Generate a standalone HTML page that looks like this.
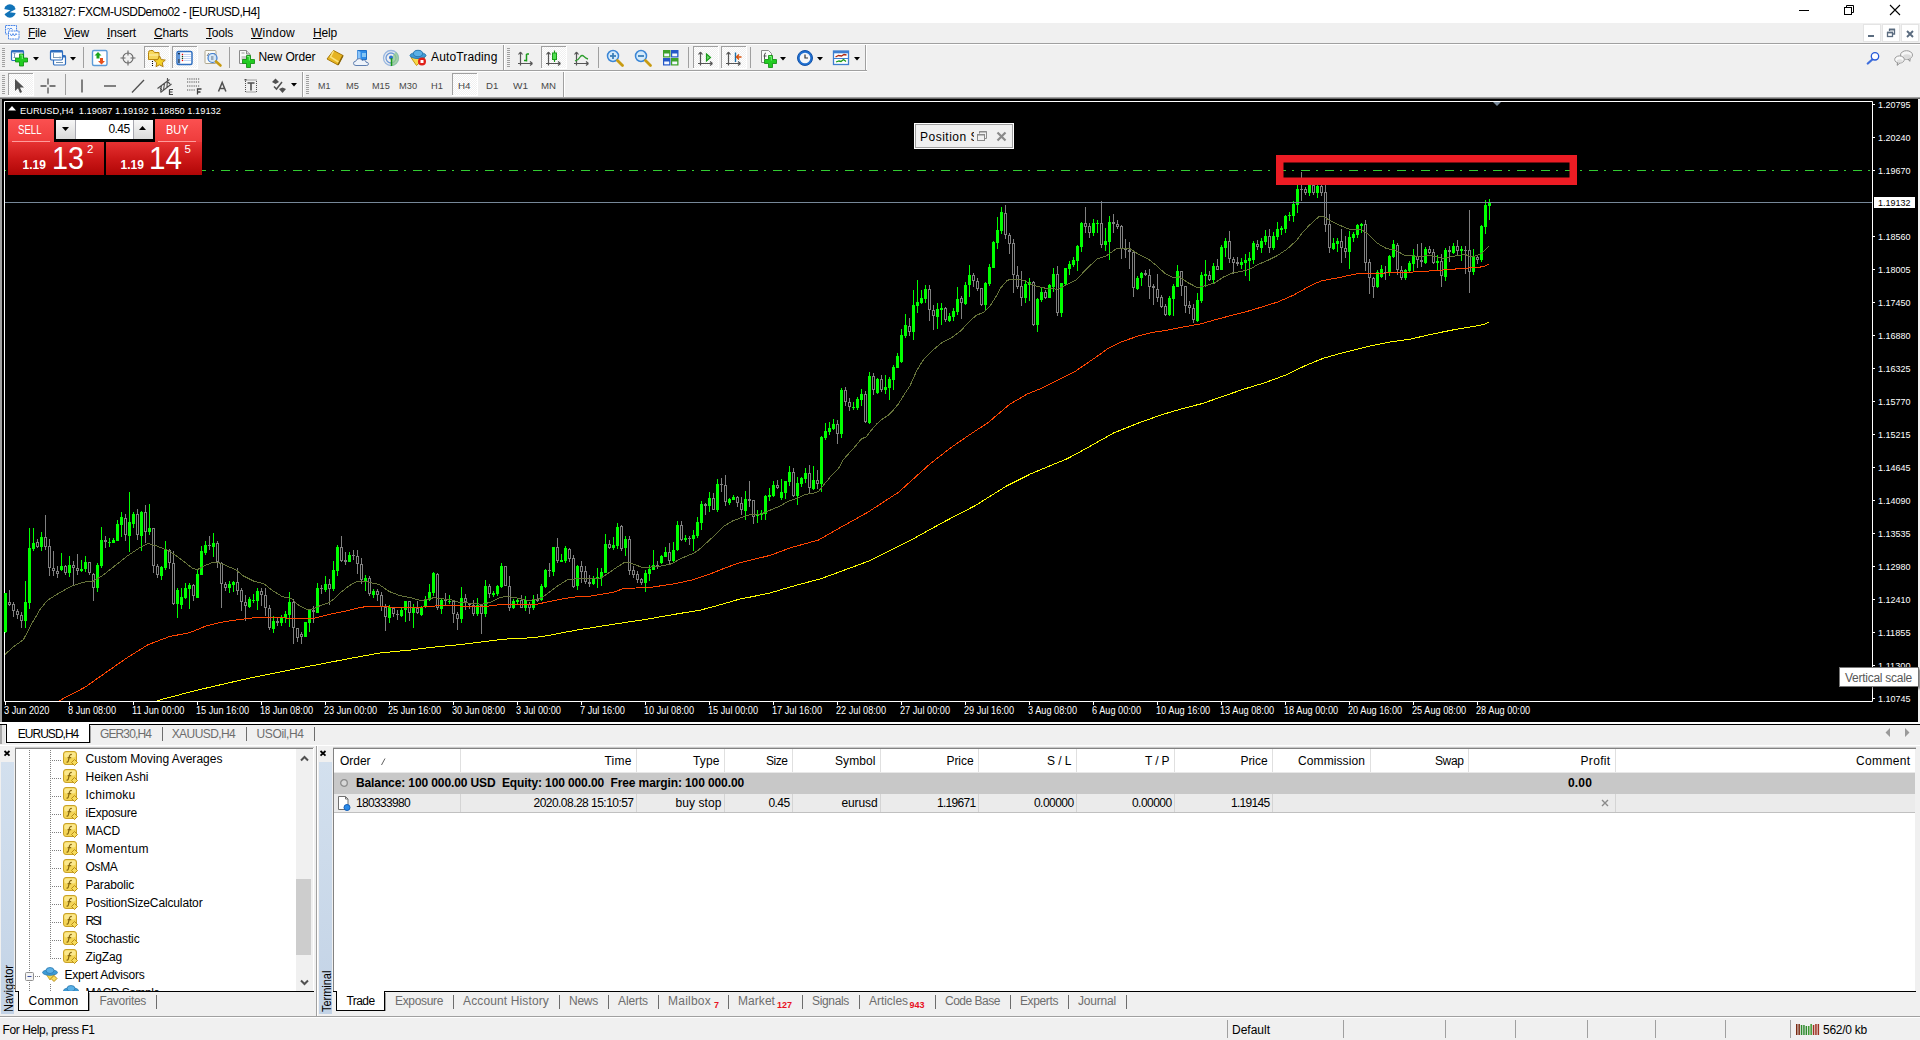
<!DOCTYPE html>
<html><head><meta charset="utf-8"><title>51331827: FXCM-USDDemo02 - [EURUSD,H4]</title>
<style>
html,body{margin:0;padding:0;}
body{width:1920px;height:1040px;overflow:hidden;background:#f0f0f0;font-family:"Liberation Sans", sans-serif;font-size:12px;position:relative;}
svg{display:block;overflow:visible}
u{text-decoration:underline;text-underline-offset:1px}
</style></head><body>
<div style="position:absolute;left:0px;top:0px;width:1920px;height:23px;background:#fff;"></div>
<svg style="position:absolute;left:0px;top:0px" width="20" height="22" viewBox="0 0 20 22"><ellipse cx="9.900" cy="11" rx="6" ry="6.800" fill="#1173b8"/><path d="M2.500 8.700L10.400 10.300L2.500 15.400Z" fill="#fff"/><path d="M17.500 8.300L9.800 12.200L17.500 13.300Z" fill="#fff"/></svg>
<span style="position:absolute;left:23.00px;top:3.84px;font-size:12px;line-height:16px;color:#000;white-space:pre;letter-spacing:-0.498px;">51331827: FXCM-USDDemo02 - [EURUSD,H4]</span>
<div style="position:absolute;left:1799px;top:10px;width:10px;height:1px;background:#000;"></div>
<svg style="position:absolute;left:1843px;top:4px" width="12" height="12"><path d="M3.500 3.500v-2h7v7h-2" fill="none" stroke="#000"/><rect x="1.500" y="3.500" width="7" height="7" fill="none" stroke="#000"/></svg>
<svg style="position:absolute;left:1889px;top:4px" width="12" height="12"><path d="M1 1l10 10M11 1l-10 10" stroke="#000" stroke-width="1.100"/></svg>
<div style="position:absolute;left:0px;top:23px;width:1920px;height:20px;background:#f0f0f0;"></div>
<svg style="position:absolute;left:4px;top:24px" width="17" height="17" viewBox="0 0 17 17"><rect x="1.500" y="1.500" width="11" height="8.500" fill="#f4f8fd" stroke="#4a86e8" stroke-dasharray="2 .6"/><path d="M3 5.500l1.500-1.500 1 1.500 1.500-1.500 1.500 1.500" stroke="#4a86e8" fill="none" stroke-width=".9"/><rect x="4.500" y="7" width="10.500" height="8" fill="#fff" stroke="#4a86e8" stroke-dasharray="2 .6"/><path d="M6 9.500l1.500 2.500 1.500-2.500 1.500 2.500 1.500-2.500 1 1.500" stroke="#4a86e8" fill="none" stroke-width=".9"/></svg>
<span style="position:absolute;left:28.00px;top:24.84px;font-size:12px;line-height:16px;color:#000;white-space:pre;letter-spacing:-0.334px;"><u>F</u>ile</span>
<span style="position:absolute;left:64.00px;top:24.84px;font-size:12px;line-height:16px;color:#000;white-space:pre;letter-spacing:-0.198px;"><u>V</u>iew</span>
<span style="position:absolute;left:107.00px;top:24.84px;font-size:12px;line-height:16px;color:#000;white-space:pre;letter-spacing:-0.169px;"><u>I</u>nsert</span>
<span style="position:absolute;left:154.00px;top:24.84px;font-size:12px;line-height:16px;color:#000;white-space:pre;letter-spacing:-0.224px;"><u>C</u>harts</span>
<span style="position:absolute;left:206.00px;top:24.84px;font-size:12px;line-height:16px;color:#000;white-space:pre;letter-spacing:-0.203px;"><u>T</u>ools</span>
<span style="position:absolute;left:251.00px;top:24.84px;font-size:12px;line-height:16px;color:#000;white-space:pre;letter-spacing:0.220px;"><u>W</u>indow</span>
<span style="position:absolute;left:313.00px;top:24.84px;font-size:12px;line-height:16px;color:#000;white-space:pre;letter-spacing:-0.170px;"><u>H</u>elp</span>
<div style="position:absolute;left:1863px;top:24px;width:18px;height:18px;background:#fff;border:1px solid #e4e4e4;box-sizing:border-box"></div>
<div style="position:absolute;left:1882px;top:24px;width:18px;height:18px;background:#fff;border:1px solid #e4e4e4;box-sizing:border-box"></div>
<div style="position:absolute;left:1901px;top:24px;width:18px;height:18px;background:#fff;border:1px solid #e4e4e4;box-sizing:border-box"></div>
<div style="position:absolute;left:1868px;top:35px;width:6px;height:2px;background:#5a6b7f;"></div>
<svg style="position:absolute;left:1886px;top:28px" width="10" height="10"><path d="M3.500 3v-1.500h5v4.500h-1.500" fill="none" stroke="#5a6b7f" stroke-width="1.300"/><path d="M3 1.500h6" stroke="#5a6b7f" stroke-width="1.600"/><rect x="1.500" y="4.500" width="5" height="4" fill="none" stroke="#5a6b7f" stroke-width="1.300"/><path d="M1 4.500h6" stroke="#5a6b7f" stroke-width="1.600"/></svg>
<svg style="position:absolute;left:1906px;top:30px" width="8" height="8"><path d="M1 1l6 6M7 1l-6 6" stroke="#5a6b7f" stroke-width="1.900"/></svg>
<div style="position:absolute;left:0px;top:43px;width:1920px;height:1px;background:#a0a0a0;"></div>
<div style="position:absolute;left:0px;top:44px;width:1920px;height:1px;background:#fff;"></div>
<div style="position:absolute;left:0px;top:70px;width:867px;height:1px;background:#a0a0a0;"></div>
<div style="position:absolute;left:0px;top:71px;width:867px;height:1px;background:#fff;"></div>
<div style="position:absolute;left:2px;top:48px;width:3px;height:1px;background:#a0a0a0;"></div>
<div style="position:absolute;left:2px;top:50px;width:3px;height:1px;background:#a0a0a0;"></div>
<div style="position:absolute;left:2px;top:52px;width:3px;height:1px;background:#a0a0a0;"></div>
<div style="position:absolute;left:2px;top:54px;width:3px;height:1px;background:#a0a0a0;"></div>
<div style="position:absolute;left:2px;top:56px;width:3px;height:1px;background:#a0a0a0;"></div>
<div style="position:absolute;left:2px;top:58px;width:3px;height:1px;background:#a0a0a0;"></div>
<div style="position:absolute;left:2px;top:60px;width:3px;height:1px;background:#a0a0a0;"></div>
<div style="position:absolute;left:2px;top:62px;width:3px;height:1px;background:#a0a0a0;"></div>
<div style="position:absolute;left:2px;top:64px;width:3px;height:1px;background:#a0a0a0;"></div>
<div style="position:absolute;left:2px;top:66px;width:3px;height:1px;background:#a0a0a0;"></div>
<svg style="position:absolute;left:8px;top:48px" width="20" height="20" viewBox="0 0 20 20"><rect x="3.5" y="2.5" width="12" height="10" rx="1.2" fill="#fff" stroke="#2f6fc0" stroke-width="1.2"/><rect x="3.5" y="2.5" width="12" height="2" fill="#2f6fc0"/><path d="M6.5 5v5M5.5 6l1-1 1 1M5.5 9l1 1 1-1" stroke="#7090b0" fill="none" stroke-width=".9"/><path d="M11.5 6h4v4h4v4h-4v4h-4v-4h-4v-4h4z" fill="#22cc22" stroke="#0a8a0a" stroke-width="0.8"/><path d="M12.3 7h2v4" fill="none" stroke="#9f9" stroke-width="1" opacity=".8"/></svg>
<svg style="position:absolute;left:32.5px;top:56.5px" width="6" height="4"><path d="M0 0h6L3 3.500z" fill="#000"/></svg>
<svg style="position:absolute;left:47px;top:48px" width="20" height="20" viewBox="0 0 20 20"><rect x="6.5" y="7.5" width="12" height="9.5" rx="1.2" fill="#fff" stroke="#2f6fc0" stroke-width="1.2"/><rect x="6.5" y="7.5" width="12" height="2" fill="#2f6fc0"/><path d="M9 14.5h7" stroke="#7090b0"/><rect x="3.5" y="2.5" width="12" height="9.5" rx="1.2" fill="#fff" stroke="#2f6fc0" stroke-width="1.2"/><rect x="3.5" y="2.5" width="12" height="2" fill="#2f6fc0"/><path d="M6.5 5v5M6 9.5h8M13 8.5l1 1-1 1" stroke="#7090b0" fill="none" stroke-width=".9"/></svg>
<svg style="position:absolute;left:69.5px;top:56.5px" width="6" height="4"><path d="M0 0h6L3 3.500z" fill="#000"/></svg>
<div style="position:absolute;left:83px;top:47px;width:1px;height:21px;background:#a0a0a0;"></div>
<svg style="position:absolute;left:90px;top:48px" width="20" height="20" viewBox="0 0 20 20"><rect x="2.5" y="2.5" width="14.5" height="15" rx="1.5" fill="#fff" stroke="#5b9bd8" stroke-width="1.4"/><path d="M8 4l3.5 3.5h-2v3h-3v-3h-2z" fill="#1aa51a"/><path d="M11.500 16.500l3.500-3.500h-2v-3h-3v3h-2z" fill="#e8501a"/></svg>
<svg style="position:absolute;left:118px;top:48px" width="20" height="20" viewBox="0 0 20 20"><circle cx="10" cy="10" r="5" fill="none" stroke="#666" stroke-width="1.100"/><path d="M10 2.500v5M10 12.500v5M2.500 10h5M12.500 10h5" stroke="#666" stroke-width="1.100"/></svg>
<div style="position:absolute;left:144px;top:46px;width:25px;height:22px;background:#f8f8f8;background-image:repeating-conic-gradient(#fff 0 25%,#f0f0f0 0 50%);background-size:2px 2px;"></div>
<div style="position:absolute;left:144px;top:46px;width:25px;height:1px;background:#a0a0a0;"></div>
<div style="position:absolute;left:144px;top:46px;width:1px;height:22px;background:#a0a0a0;"></div>
<div style="position:absolute;left:144px;top:68px;width:26px;height:1px;background:#fff;"></div>
<div style="position:absolute;left:169px;top:46px;width:1px;height:22px;background:#fff;"></div>
<svg style="position:absolute;left:146px;top:48px" width="20" height="20" viewBox="0 0 20 20"><path d="M2.500 4.500q0-2 2-2h2.500l1.500 2h4.500v7h-10.500z" fill="#f6d75c" stroke="#b8860b" stroke-width="1"/><path d="M3 7h9.500" stroke="#fff3b0"/><path d="M13.500 8l1.800 3.600 4 .5-3 2.700.8 3.900-3.600-1.900-3.500 1.900.7-3.900-2.900-2.700 4-.5z" fill="#f5d328" stroke="#b07d10" stroke-width="1"/><path d="M6.500 13v5" stroke="#000" stroke-dasharray="1 1"/></svg>
<div style="position:absolute;left:172px;top:46px;width:25px;height:22px;background:#f8f8f8;background-image:repeating-conic-gradient(#fff 0 25%,#f0f0f0 0 50%);background-size:2px 2px;"></div>
<div style="position:absolute;left:172px;top:46px;width:25px;height:1px;background:#a0a0a0;"></div>
<div style="position:absolute;left:172px;top:46px;width:1px;height:22px;background:#a0a0a0;"></div>
<div style="position:absolute;left:172px;top:68px;width:26px;height:1px;background:#fff;"></div>
<div style="position:absolute;left:197px;top:46px;width:1px;height:22px;background:#fff;"></div>
<svg style="position:absolute;left:174px;top:48px" width="20" height="20" viewBox="0 0 20 20"><rect x="3" y="3.500" width="15" height="13" rx="1.500" fill="#fff" stroke="#2f6fc0" stroke-width="1.500"/><rect x="3.800" y="4.300" width="2.400" height="11.400" fill="#5b95dd"/><rect x="4.300" y="11" width="1.200" height="4" fill="#444"/><path d="M9.500 6.500h7.500M9.500 8.500h7.500M9.500 10.500h7.500M9.500 12.500h7.500" stroke="#c4d6f4"/><rect x="7.800" y="5.800" width="1.300" height="1.300" fill="#e00"/><rect x="7.800" y="7.800" width="1.300" height="1.300" fill="#141"/><rect x="7.800" y="9.800" width="1.300" height="1.300" fill="#141"/><rect x="7.800" y="11.800" width="1.300" height="1.300" fill="#e00"/><rect x="4.300" y="5" width="1.300" height="1.300" fill="#000"/></svg>
<svg style="position:absolute;left:202px;top:48px" width="20" height="20" viewBox="0 0 20 20"><rect x="3" y="2.500" width="11" height="13" rx="1" fill="#fbfbf6" stroke="#b0a890" stroke-width="1"/><path d="M5 8l2-3M12 5l1 3" stroke="#777"/><circle cx="10.500" cy="10" r="4.500" fill="#cfe4f7" fill-opacity=".85" stroke="#3b7bd0" stroke-width="1.200"/><rect x="9" y="8" width="2.500" height="4" fill="#9ab"/><path d="M14 13.500l4.500 4" stroke="#c89b12" stroke-width="2.600" stroke-linecap="round"/></svg>
<div style="position:absolute;left:229px;top:47px;width:1px;height:21px;background:#a0a0a0;"></div>
<svg style="position:absolute;left:236px;top:48px" width="20" height="20" viewBox="0 0 20 20"><path d="M3.500 2.500h7l3.500 3.500v9.500h-10.500z" fill="#fafafa" stroke="#8a8a8a" stroke-width="1"/><path d="M10.500 2.500v3.500h3.500" fill="#ddd" stroke="#8a8a8a"/><path d="M5.500 5h3M5.500 9h6M5.500 11h6" stroke="#999"/><path d="M10.5 7.5h4v4h4v4h-4v4h-4v-4h-4v-4h4z" fill="#22cc22" stroke="#0a8a0a" stroke-width="0.8"/><path d="M11.3 8.5h2v4" fill="none" stroke="#9f9" stroke-width="1" opacity=".8"/></svg>
<span style="position:absolute;left:258.50px;top:48.84px;font-size:12px;line-height:16px;color:#000;white-space:pre;letter-spacing:-0.113px;">New Order</span>
<svg style="position:absolute;left:325px;top:48px" width="20" height="20" viewBox="0 0 20 20"><path d="M2 11l6.500-8.500 9.500 5-5 9.500z" fill="#e6b422" stroke="#a87908" stroke-width="1"/><path d="M8.500 3l-3 6 8 5" fill="none" stroke="#fbe27a" stroke-width="1.500"/><path d="M13 17l5-9.500" stroke="#8a6508" stroke-width="1.500"/></svg>
<svg style="position:absolute;left:352px;top:48px" width="20" height="20" viewBox="0 0 20 20"><path d="M5.500 2.500h9v9h-9z" fill="#2f8de8" stroke="#1d6fc8"/><path d="M5.500 2.500l3 1.500v9l-3-1.500z" fill="#8cc4f8"/><path d="M10 6h4M10 8h4" stroke="#dff"/><path d="M4 17.500q-2.500 0-2.500-2.200 0-2 2.300-2.100 .6-2.600 3.400-2.600 2.400 0 3.100 2 1-.9 2.400-.4 1.300.5 1.300 2 2.500 0 2.500 1.700t-2.300 1.600z" fill="#eef3fa" stroke="#5f7fb0" stroke-width="1"/></svg>
<svg style="position:absolute;left:381px;top:48px" width="20" height="20" viewBox="0 0 20 20"><circle cx="10" cy="10" r="7.500" fill="none" stroke="#9ab8e0" stroke-width="1.300"/><circle cx="10" cy="10" r="5" fill="none" stroke="#6f9ad8" stroke-width="1.300"/><path d="M10 10v8a8 8 0 0 0 8-8 8 8 0 0 0-3-6.200z" fill="#8fc98f" fill-opacity=".75"/><circle cx="10" cy="9.500" r="2" fill="#2a6fd0"/><path d="M10.500 10v8" stroke="#1a9a1a" stroke-width="1.500"/></svg>
<svg style="position:absolute;left:408px;top:48px" width="20" height="20" viewBox="0 0 20 20"><path d="M3 9.500l5.500 8 8.500-8z" fill="#f7d94a" stroke="#c79a10" stroke-width="1"/><ellipse cx="10" cy="7.500" rx="8" ry="3" fill="#3d9bd6" stroke="#2a78b0"/><ellipse cx="10" cy="5.500" rx="4.500" ry="3.200" fill="#5ab0e6" stroke="#2a78b0"/><circle cx="14" cy="13.500" r="4" fill="#e0201a"/><rect x="12.500" y="12" width="3" height="3" fill="#fff"/></svg>
<span style="position:absolute;left:431.00px;top:48.84px;font-size:12px;line-height:16px;color:#000;white-space:pre;letter-spacing:0.143px;">AutoTrading</span>
<div style="position:absolute;left:503px;top:45px;width:1px;height:25px;background:#a0a0a0;"></div>
<div style="position:absolute;left:504px;top:45px;width:1px;height:25px;background:#fff;"></div>
<div style="position:absolute;left:507px;top:48px;width:3px;height:1px;background:#a0a0a0;"></div>
<div style="position:absolute;left:507px;top:50px;width:3px;height:1px;background:#a0a0a0;"></div>
<div style="position:absolute;left:507px;top:52px;width:3px;height:1px;background:#a0a0a0;"></div>
<div style="position:absolute;left:507px;top:54px;width:3px;height:1px;background:#a0a0a0;"></div>
<div style="position:absolute;left:507px;top:56px;width:3px;height:1px;background:#a0a0a0;"></div>
<div style="position:absolute;left:507px;top:58px;width:3px;height:1px;background:#a0a0a0;"></div>
<div style="position:absolute;left:507px;top:60px;width:3px;height:1px;background:#a0a0a0;"></div>
<div style="position:absolute;left:507px;top:62px;width:3px;height:1px;background:#a0a0a0;"></div>
<div style="position:absolute;left:507px;top:64px;width:3px;height:1px;background:#a0a0a0;"></div>
<div style="position:absolute;left:507px;top:66px;width:3px;height:1px;background:#a0a0a0;"></div>
<svg style="position:absolute;left:516px;top:48px" width="20" height="20" viewBox="0 0 20 20"><path d="M4.500 4.500v13M2 15.500h14M4.500 4l-2 2.500M4.500 4l2 2.500M16.500 15.500l-2.500-2M16.500 15.500l-2.500 2" stroke="#555" stroke-width="1.200" fill="none"/><path d="M10.500 6v7.500M10.500 6h2.500M8 12.500h2.500" stroke="#1a9a1a" stroke-width="1.500" fill="none"/></svg>
<div style="position:absolute;left:541px;top:46px;width:25px;height:22px;background:#f8f8f8;background-image:repeating-conic-gradient(#fff 0 25%,#f0f0f0 0 50%);background-size:2px 2px;"></div>
<div style="position:absolute;left:541px;top:46px;width:25px;height:1px;background:#a0a0a0;"></div>
<div style="position:absolute;left:541px;top:46px;width:1px;height:22px;background:#a0a0a0;"></div>
<div style="position:absolute;left:541px;top:68px;width:26px;height:1px;background:#fff;"></div>
<div style="position:absolute;left:566px;top:46px;width:1px;height:22px;background:#fff;"></div>
<svg style="position:absolute;left:544px;top:48px" width="20" height="20" viewBox="0 0 20 20"><path d="M4.500 4.500v13M2 15.500h14M4.500 4l-2 2.500M4.500 4l2 2.500M16.500 15.500l-2.500-2M16.500 15.500l-2.500 2" stroke="#555" stroke-width="1.200" fill="none"/><path d="M10.500 2.500v11.500" stroke="#1a9a1a" stroke-width="1.200"/><rect x="8.500" y="5" width="4" height="6.500" fill="#4fe04f" stroke="#1a9a1a"/></svg>
<svg style="position:absolute;left:572px;top:48px" width="20" height="20" viewBox="0 0 20 20"><path d="M4.500 4.500v13M2 15.500h14M4.500 4l-2 2.500M4.500 4l2 2.500M16.500 15.500l-2.500-2M16.500 15.500l-2.500 2" stroke="#555" stroke-width="1.200" fill="none"/><path d="M3 13q4-1.500 5.500-4.500 1.500-2 3.500 0t4 2.500" stroke="#2e9e2e" stroke-width="1.300" fill="none"/></svg>
<div style="position:absolute;left:598px;top:47px;width:1px;height:21px;background:#a0a0a0;"></div>
<svg style="position:absolute;left:605px;top:48px" width="20" height="20" viewBox="0 0 20 20"><circle cx="8" cy="8" r="5.500" fill="#d5ebfb" stroke="#3b86d6" stroke-width="1.500"/><path d="M12.500 12.500l5 5" stroke="#c89b12" stroke-width="2.800" stroke-linecap="round"/><path d="M5 8h6" stroke="#3b7fb8" stroke-width="1.800"/><path d="M8 5v6" stroke="#3b7fb8" stroke-width="1.800"/></svg>
<svg style="position:absolute;left:633px;top:48px" width="20" height="20" viewBox="0 0 20 20"><circle cx="8" cy="8" r="5.500" fill="#d5ebfb" stroke="#3b86d6" stroke-width="1.500"/><path d="M12.500 12.500l5 5" stroke="#c89b12" stroke-width="2.800" stroke-linecap="round"/><path d="M5 8h6" stroke="#3b7fb8" stroke-width="1.800"/></svg>
<svg style="position:absolute;left:661px;top:48px" width="20" height="20" viewBox="0 0 20 20"><rect x="2" y="2" width="7.500" height="7.500" fill="#3da22a"/><rect x="3.2" y="5.5" width="5" height="2.800" fill="#f4f8ff"/><rect x="10" y="2" width="7.500" height="7.500" fill="#2458c8"/><rect x="11.2" y="5.5" width="5" height="2.800" fill="#f4f8ff"/><rect x="2" y="10" width="7.500" height="7.500" fill="#2458c8"/><rect x="3.2" y="13.5" width="5" height="2.800" fill="#f4f8ff"/><rect x="10" y="10" width="7.500" height="7.500" fill="#3da22a"/><rect x="11.2" y="13.5" width="5" height="2.800" fill="#f4f8ff"/></svg>
<div style="position:absolute;left:688px;top:47px;width:1px;height:21px;background:#a0a0a0;"></div>
<div style="position:absolute;left:693px;top:46px;width:25px;height:22px;background:#f8f8f8;background-image:repeating-conic-gradient(#fff 0 25%,#f0f0f0 0 50%);background-size:2px 2px;"></div>
<div style="position:absolute;left:693px;top:46px;width:25px;height:1px;background:#a0a0a0;"></div>
<div style="position:absolute;left:693px;top:46px;width:1px;height:22px;background:#a0a0a0;"></div>
<div style="position:absolute;left:693px;top:68px;width:26px;height:1px;background:#fff;"></div>
<div style="position:absolute;left:718px;top:46px;width:1px;height:22px;background:#fff;"></div>
<svg style="position:absolute;left:696px;top:48px" width="20" height="20" viewBox="0 0 20 20"><path d="M4.500 4.500v13M2 15.500h14M4.500 4l-2 2.500M4.500 4l2 2.500M16.500 15.500l-2.500-2M16.500 15.500l-2.500 2" stroke="#555" stroke-width="1.200" fill="none"/><path d="M10.500 6l4 3.500-4 3.500z" fill="#6fdc6f" stroke="#1a9a1a" stroke-width="1.200"/></svg>
<div style="position:absolute;left:721px;top:46px;width:25px;height:22px;background:#f8f8f8;background-image:repeating-conic-gradient(#fff 0 25%,#f0f0f0 0 50%);background-size:2px 2px;"></div>
<div style="position:absolute;left:721px;top:46px;width:25px;height:1px;background:#a0a0a0;"></div>
<div style="position:absolute;left:721px;top:46px;width:1px;height:22px;background:#a0a0a0;"></div>
<div style="position:absolute;left:721px;top:68px;width:26px;height:1px;background:#fff;"></div>
<div style="position:absolute;left:746px;top:46px;width:1px;height:22px;background:#fff;"></div>
<svg style="position:absolute;left:724px;top:48px" width="20" height="20" viewBox="0 0 20 20"><path d="M4.500 4.500v13M2 15.500h14M4.500 4l-2 2.500M4.500 4l2 2.500M16.500 15.500l-2.500-2M16.500 15.500l-2.500 2" stroke="#555" stroke-width="1.200" fill="none"/><path d="M11.500 4.500v9.500" stroke="#1a6fa8" stroke-width="1.400"/><path d="M17.500 9h-5M15 6.500l-2.500 2.500 2.500 2.500" stroke="#d8500a" stroke-width="1.400" fill="none"/></svg>
<div style="position:absolute;left:750px;top:47px;width:1px;height:21px;background:#a0a0a0;"></div>
<svg style="position:absolute;left:758px;top:48px" width="20" height="20" viewBox="0 0 20 20"><path d="M3.500 2.500h7l3 3v9h-10z" fill="#fafafa" stroke="#8a8a8a"/><path d="M8 5q-1.500 0-1.500 2v4" stroke="#555" fill="none"/><path d="M5.500 8h3" stroke="#555"/><path d="M10.5 7.5h4v4h4v4h-4v4h-4v-4h-4v-4h4z" fill="#22cc22" stroke="#0a8a0a" stroke-width="0.8"/><path d="M11.3 8.5h2v4" fill="none" stroke="#9f9" stroke-width="1" opacity=".8"/></svg>
<svg style="position:absolute;left:779.5px;top:56.5px" width="6" height="4"><path d="M0 0h6L3 3.500z" fill="#000"/></svg>
<svg style="position:absolute;left:795px;top:48px" width="20" height="20" viewBox="0 0 20 20"><circle cx="10" cy="10" r="7.500" fill="#1f6fd0" stroke="#1452a8"/><circle cx="10" cy="10" r="5.300" fill="#f4f6f8"/><path d="M10 6.500v3.500h3" stroke="#333" stroke-width="1.200" fill="none"/></svg>
<svg style="position:absolute;left:816.5px;top:56.5px" width="6" height="4"><path d="M0 0h6L3 3.500z" fill="#000"/></svg>
<svg style="position:absolute;left:831px;top:48px" width="20" height="20" viewBox="0 0 20 20"><rect x="2.500" y="3" width="15" height="13.500" fill="#fff" stroke="#3f7fd0" stroke-width="1.300"/><rect x="2.500" y="3" width="15" height="2.300" fill="#3f7fd0"/><path d="M2.500 10.500h15" stroke="#3f7fd0"/><path d="M4.500 9l3-1.500 3 .5 2.500-1.500 2.500 .5" stroke="#b02a10" stroke-width="1.300" fill="none"/><path d="M5 14l3-1 2 .5 2.500-2 2.500 2" stroke="#1a9a1a" stroke-width="1.300" fill="none"/></svg>
<svg style="position:absolute;left:853.5px;top:56.5px" width="6" height="4"><path d="M0 0h6L3 3.500z" fill="#000"/></svg>
<div style="position:absolute;left:865px;top:45px;width:1px;height:25px;background:#a0a0a0;"></div>
<div style="position:absolute;left:866px;top:45px;width:1px;height:25px;background:#fff;"></div>
<svg style="position:absolute;left:1862px;top:48px" width="20" height="20" viewBox="0 0 20 20"><path d="M10.300 11.500l-4.500 4" stroke="#3f6fdc" stroke-width="2.300" stroke-linecap="round"/><circle cx="13" cy="8.300" r="3.700" fill="#fdfdff" stroke="#2458d8" stroke-width="1.300"/></svg>
<svg style="position:absolute;left:1893px;top:48px" width="20" height="20" viewBox="0 0 20 20"><ellipse cx="13.500" cy="7" rx="6" ry="4.300" fill="#f6f6f6" stroke="#9a9a9a"/><ellipse cx="14" cy="8.500" rx="4" ry="2.200" fill="#dcdcdc"/><path d="M15 11l1.800 2.300.4-2.800" fill="#e8e8e8" stroke="#8c8c8c"/><ellipse cx="6.500" cy="11.500" rx="4.800" ry="3.600" fill="#fafafa" stroke="#9a9a9a"/><ellipse cx="6.800" cy="12.800" rx="3" ry="1.600" fill="#e2e2e2"/><path d="M4.500 14.500l-.3 2.800 2.600-2.200" fill="#f0f0f0" stroke="#8c8c8c"/></svg>
<div style="position:absolute;left:2px;top:75px;width:3px;height:1px;background:#a0a0a0;"></div>
<div style="position:absolute;left:2px;top:77px;width:3px;height:1px;background:#a0a0a0;"></div>
<div style="position:absolute;left:2px;top:79px;width:3px;height:1px;background:#a0a0a0;"></div>
<div style="position:absolute;left:2px;top:81px;width:3px;height:1px;background:#a0a0a0;"></div>
<div style="position:absolute;left:2px;top:83px;width:3px;height:1px;background:#a0a0a0;"></div>
<div style="position:absolute;left:2px;top:85px;width:3px;height:1px;background:#a0a0a0;"></div>
<div style="position:absolute;left:2px;top:87px;width:3px;height:1px;background:#a0a0a0;"></div>
<div style="position:absolute;left:2px;top:89px;width:3px;height:1px;background:#a0a0a0;"></div>
<div style="position:absolute;left:2px;top:91px;width:3px;height:1px;background:#a0a0a0;"></div>
<div style="position:absolute;left:2px;top:93px;width:3px;height:1px;background:#a0a0a0;"></div>
<div style="position:absolute;left:8px;top:73px;width:25px;height:22px;background:#f8f8f8;background-image:repeating-conic-gradient(#fff 0 25%,#f0f0f0 0 50%);background-size:2px 2px;"></div>
<div style="position:absolute;left:8px;top:73px;width:25px;height:1px;background:#a0a0a0;"></div>
<div style="position:absolute;left:8px;top:73px;width:1px;height:22px;background:#a0a0a0;"></div>
<div style="position:absolute;left:8px;top:95px;width:26px;height:1px;background:#fff;"></div>
<div style="position:absolute;left:33px;top:73px;width:1px;height:22px;background:#fff;"></div>
<svg style="position:absolute;left:9px;top:75.5px" width="20" height="20" viewBox="0 0 20 20"><path d="M6 3v12l3-2.800 2 4.800 2-.9-2-4.600h4z" fill="#505050"/></svg>
<svg style="position:absolute;left:38px;top:75.5px" width="20" height="20" viewBox="0 0 20 20"><path d="M10 2.500v6M10 11.500v6M2.500 10h6M11.500 10h6" stroke="#505050" stroke-width="1.300"/></svg>
<div style="position:absolute;left:65px;top:74px;width:1px;height:21px;background:#a0a0a0;"></div>
<svg style="position:absolute;left:72px;top:75.5px" width="20" height="20" viewBox="0 0 20 20"><path d="M10 3.500v13" stroke="#505050" stroke-width="1.400"/></svg>
<svg style="position:absolute;left:100px;top:75.5px" width="20" height="20" viewBox="0 0 20 20"><path d="M4 10h12" stroke="#505050" stroke-width="1.400"/></svg>
<svg style="position:absolute;left:128px;top:75.5px" width="20" height="20" viewBox="0 0 20 20"><path d="M4 16.500l12-12.500" stroke="#505050" stroke-width="1.300"/></svg>
<svg style="position:absolute;left:156px;top:75.5px" width="20" height="20" viewBox="0 0 20 20"><path d="M1.500 12.500l12-9M4.500 16.500l11-8.500M5.500 9.500l-1 6M8.500 7.500l-1 6.500M11.500 2l-.5 9M12 6l2 2M4 12l2 2" stroke="#505050" stroke-width="1.100" fill="none"/><path d="M13.500 13.500v5h3.500M13.500 16h3M13.500 13.500h3.500" stroke="#404040" stroke-width="1.200" fill="none"/></svg>
<svg style="position:absolute;left:184px;top:75.5px" width="20" height="20" viewBox="0 0 20 20"><path d="M3 3h13M3 6h13M3 10h13M3 14h8" stroke="#505050" stroke-width="1.100" stroke-dasharray="1.200 1"/><path d="M13.500 18.500v-5.500h4M13.500 16h3" stroke="#404040" stroke-width="1.300" fill="none"/></svg>
<svg style="position:absolute;left:212px;top:75.5px" width="20" height="20" viewBox="0 0 20 20"><path d="M6.500 15.500l3.700-9 3.700 9M7.800 12.500h4.800" stroke="#505050" stroke-width="1.500" fill="none"/></svg>
<svg style="position:absolute;left:240px;top:75.5px" width="20" height="20" viewBox="0 0 20 20"><rect x="5.500" y="4" width="11" height="12" fill="none" stroke="#505050" stroke-width="1" stroke-dasharray="1 1"/><path d="M7.500 7h7M11 7v7.500" stroke="#505050" stroke-width="1.600"/><rect x="4.500" y="3" width="2" height="1.500" fill="#505050"/></svg>
<svg style="position:absolute;left:269px;top:75.5px" width="20" height="20" viewBox="0 0 20 20"><path d="M3 6l3.500-3.500 3.500 3.500-3.500 2z" fill="#505050"/><path d="M5 10.500l2.500 2.500 5.500-7" stroke="#505050" stroke-width="1.500" fill="none"/><path d="M10 13l3.500-1.500 3.500 1.500-3.500 4z" fill="#505050"/></svg>
<svg style="position:absolute;left:290.5px;top:83px" width="6" height="4"><path d="M0 0h6L3 3.500z" fill="#000"/></svg>
<div style="position:absolute;left:302px;top:72px;width:1px;height:25px;background:#a0a0a0;"></div>
<div style="position:absolute;left:303px;top:72px;width:1px;height:25px;background:#fff;"></div>
<div style="position:absolute;left:306px;top:75px;width:3px;height:1px;background:#a0a0a0;"></div>
<div style="position:absolute;left:306px;top:77px;width:3px;height:1px;background:#a0a0a0;"></div>
<div style="position:absolute;left:306px;top:79px;width:3px;height:1px;background:#a0a0a0;"></div>
<div style="position:absolute;left:306px;top:81px;width:3px;height:1px;background:#a0a0a0;"></div>
<div style="position:absolute;left:306px;top:83px;width:3px;height:1px;background:#a0a0a0;"></div>
<div style="position:absolute;left:306px;top:85px;width:3px;height:1px;background:#a0a0a0;"></div>
<div style="position:absolute;left:306px;top:87px;width:3px;height:1px;background:#a0a0a0;"></div>
<div style="position:absolute;left:306px;top:89px;width:3px;height:1px;background:#a0a0a0;"></div>
<div style="position:absolute;left:306px;top:91px;width:3px;height:1px;background:#a0a0a0;"></div>
<div style="position:absolute;left:306px;top:93px;width:3px;height:1px;background:#a0a0a0;"></div>
<div style="position:absolute;left:452px;top:73px;width:25px;height:22px;background:#f8f8f8;background-image:repeating-conic-gradient(#fff 0 25%,#f0f0f0 0 50%);background-size:2px 2px;"></div>
<div style="position:absolute;left:452px;top:73px;width:25px;height:1px;background:#a0a0a0;"></div>
<div style="position:absolute;left:452px;top:73px;width:1px;height:22px;background:#a0a0a0;"></div>
<div style="position:absolute;left:452px;top:95px;width:26px;height:1px;background:#fff;"></div>
<div style="position:absolute;left:477px;top:73px;width:1px;height:22px;background:#fff;"></div>
<span style="position:absolute;left:317.80px;top:78.87px;font-size:9.6px;line-height:13px;color:#484848;white-space:pre;transform-origin:0 0;transform:scaleX(0.9299);">M1</span>
<span style="position:absolute;left:345.60px;top:78.87px;font-size:9.6px;line-height:13px;color:#484848;white-space:pre;transform-origin:0 0;transform:scaleX(0.9599);">M5</span>
<span style="position:absolute;left:371.60px;top:78.87px;font-size:9.6px;line-height:13px;color:#484848;white-space:pre;transform-origin:0 0;transform:scaleX(0.9532);">M15</span>
<span style="position:absolute;left:399.40px;top:78.87px;font-size:9.6px;line-height:13px;color:#484848;white-space:pre;transform-origin:0 0;transform:scaleX(0.9693);">M30</span>
<span style="position:absolute;left:430.60px;top:78.87px;font-size:9.6px;line-height:13px;color:#484848;white-space:pre;transform-origin:0 0;transform:scaleX(0.9697);">H1</span>
<span style="position:absolute;left:457.50px;top:78.87px;font-size:9.6px;line-height:13px;color:#484848;white-space:pre;transform-origin:0 0;transform:scaleX(1.0186);">H4</span>
<span style="position:absolute;left:486.00px;top:78.87px;font-size:9.6px;line-height:13px;color:#484848;white-space:pre;transform-origin:0 0;transform:scaleX(1.0023);">D1</span>
<span style="position:absolute;left:513.30px;top:78.87px;font-size:9.6px;line-height:13px;color:#484848;white-space:pre;transform-origin:0 0;transform:scaleX(1.0417);">W1</span>
<span style="position:absolute;left:540.50px;top:78.87px;font-size:9.6px;line-height:13px;color:#484848;white-space:pre;transform-origin:0 0;transform:scaleX(1.0048);">MN</span>
<div style="position:absolute;left:563px;top:72px;width:1px;height:25px;background:#a0a0a0;"></div>
<div style="position:absolute;left:564px;top:72px;width:1px;height:25px;background:#fff;"></div>
<div style="position:absolute;left:0px;top:97px;width:1920px;height:2px;background:#a0a0a0;"></div>
<div style="position:absolute;left:0px;top:98px;width:1920px;height:1px;background:#696969;"></div>
<div style="position:absolute;left:0px;top:99px;width:2px;height:624px;background:#a0a0a0;"></div>
<div style="position:absolute;left:2px;top:99px;width:1916px;height:623px;background:#000;"></div>
<div style="position:absolute;left:1918px;top:99px;width:2px;height:624px;background:#f0f0f0;"></div>
<svg style="position:absolute;left:0px;top:0px;" width="1920" height="1040" viewBox="0 0 1920 1040"><path d="M4.5 101.5H1872.5V701.5H4.5Z" fill="none" stroke="#fff" stroke-width="1"/><path d="M5 593h1V633h-1ZM25 581h1V628h-1ZM29 528h1V609h-1ZM33 528h1V551h-1ZM41 532h1V551h-1ZM61 553h1V571h-1ZM69 556h1V577h-1ZM81 560h1V572h-1ZM85 556h1V572h-1ZM97 563h1V592h-1ZM101 527h1V568h-1ZM109 538h1V547h-1ZM113 538h1V543h-1ZM117 520h1V541h-1ZM121 512h1V537h-1ZM129 492h1V552h-1ZM133 512h1V528h-1ZM141 511h1V551h-1ZM149 504h1V535h-1ZM161 566h1V580h-1ZM165 541h1V570h-1ZM177 588h1V618h-1ZM181 588h1V609h-1ZM185 583h1V599h-1ZM189 583h1V609h-1ZM197 570h1V598h-1ZM201 546h1V575h-1ZM205 541h1V555h-1ZM213 533h1V557h-1ZM229 581h1V593h-1ZM233 581h1V592h-1ZM249 597h1V608h-1ZM253 594h1V603h-1ZM257 588h1V610h-1ZM273 616h1V633h-1ZM281 615h1V626h-1ZM285 611h1V623h-1ZM289 592h1V627h-1ZM305 622h1V637h-1ZM309 610h1V632h-1ZM317 583h1V613h-1ZM325 576h1V592h-1ZM333 561h1V591h-1ZM337 545h1V576h-1ZM349 552h1V562h-1ZM365 575h1V591h-1ZM373 589h1V598h-1ZM389 605h1V623h-1ZM401 608h1V617h-1ZM405 601h1V622h-1ZM413 604h1V628h-1ZM421 606h1V616h-1ZM425 596h1V608h-1ZM429 584h1V601h-1ZM433 572h1V596h-1ZM441 599h1V614h-1ZM449 595h1V604h-1ZM461 587h1V623h-1ZM477 598h1V616h-1ZM485 580h1V617h-1ZM493 591h1V597h-1ZM497 585h1V596h-1ZM501 563h1V588h-1ZM513 599h1V609h-1ZM517 599h1V604h-1ZM525 596h1V611h-1ZM533 595h1V610h-1ZM541 584h1V601h-1ZM545 569h1V588h-1ZM553 547h1V576h-1ZM561 554h1V562h-1ZM565 546h1V563h-1ZM577 565h1V590h-1ZM593 576h1V585h-1ZM597 568h1V588h-1ZM601 568h1V586h-1ZM605 534h1V573h-1ZM613 537h1V550h-1ZM617 523h1V549h-1ZM625 536h1V556h-1ZM645 570h1V592h-1ZM649 565h1V581h-1ZM653 550h1V570h-1ZM661 555h1V564h-1ZM665 547h1V557h-1ZM673 542h1V563h-1ZM677 521h1V551h-1ZM685 535h1V542h-1ZM693 530h1V551h-1ZM697 517h1V538h-1ZM701 501h1V530h-1ZM709 492h1V512h-1ZM717 479h1V512h-1ZM729 498h1V505h-1ZM733 495h1V500h-1ZM745 491h1V520h-1ZM757 510h1V523h-1ZM761 510h1V520h-1ZM765 495h1V520h-1ZM769 488h1V501h-1ZM773 481h1V497h-1ZM781 479h1V500h-1ZM785 481h1V499h-1ZM789 466h1V486h-1ZM797 477h1V505h-1ZM801 477h1V487h-1ZM805 468h1V483h-1ZM813 466h1V490h-1ZM821 436h1V492h-1ZM825 423h1V440h-1ZM829 422h1V435h-1ZM833 419h1V430h-1ZM841 388h1V438h-1ZM853 402h1V410h-1ZM857 397h1V410h-1ZM861 389h1V406h-1ZM869 372h1V424h-1ZM877 378h1V394h-1ZM885 375h1V394h-1ZM889 377h1V400h-1ZM893 365h1V390h-1ZM897 353h1V368h-1ZM901 329h1V363h-1ZM905 314h1V338h-1ZM913 290h1V340h-1ZM917 280h1V313h-1ZM921 290h1V304h-1ZM925 285h1V303h-1ZM937 303h1V329h-1ZM941 303h1V325h-1ZM949 313h1V322h-1ZM953 308h1V321h-1ZM957 287h1V315h-1ZM965 282h1V305h-1ZM969 265h1V297h-1ZM985 282h1V311h-1ZM989 264h1V286h-1ZM993 241h1V268h-1ZM997 217h1V249h-1ZM1001 207h1V234h-1ZM1025 280h1V303h-1ZM1029 278h1V301h-1ZM1037 298h1V332h-1ZM1041 288h1V302h-1ZM1049 284h1V298h-1ZM1053 268h1V292h-1ZM1061 283h1V317h-1ZM1065 268h1V285h-1ZM1069 261h1V275h-1ZM1073 257h1V267h-1ZM1077 245h1V271h-1ZM1081 222h1V252h-1ZM1093 219h1V236h-1ZM1097 220h1V233h-1ZM1105 228h1V251h-1ZM1109 216h1V260h-1ZM1137 276h1V290h-1ZM1141 272h1V286h-1ZM1169 296h1V316h-1ZM1173 284h1V316h-1ZM1177 265h1V287h-1ZM1197 293h1V322h-1ZM1201 272h1V303h-1ZM1205 260h1V287h-1ZM1213 263h1V284h-1ZM1221 245h1V270h-1ZM1225 238h1V257h-1ZM1241 258h1V269h-1ZM1245 254h1V276h-1ZM1249 252h1V281h-1ZM1253 241h1V264h-1ZM1261 238h1V253h-1ZM1265 230h1V245h-1ZM1273 232h1V250h-1ZM1277 222h1V240h-1ZM1281 226h1V235h-1ZM1285 215h1V233h-1ZM1289 212h1V221h-1ZM1293 201h1V222h-1ZM1297 185h1V213h-1ZM1309 184h1V196h-1ZM1317 185h1V198h-1ZM1333 238h1V250h-1ZM1337 238h1V252h-1ZM1349 231h1V269h-1ZM1353 232h1V242h-1ZM1357 224h1V238h-1ZM1361 223h1V233h-1ZM1377 270h1V288h-1ZM1381 265h1V278h-1ZM1389 255h1V276h-1ZM1393 240h1V258h-1ZM1405 269h1V280h-1ZM1409 261h1V272h-1ZM1413 249h1V272h-1ZM1425 247h1V264h-1ZM1437 255h1V270h-1ZM1445 248h1V281h-1ZM1453 243h1V254h-1ZM1461 246h1V261h-1ZM1473 249h1V275h-1ZM1481 225h1V262h-1ZM1485 200h1V234h-1ZM1489 199h1V220h-1ZM4 593h3V632h-3ZM24 602h3V621h-3ZM28 548h3V603h-3ZM32 543h3V549h-3ZM40 537h3V547h-3ZM60 566h3V570h-3ZM68 565h3V573h-3ZM80 569h3V571h-3ZM84 562h3V569h-3ZM96 565h3V588h-3ZM100 540h3V566h-3ZM108 542h3V543h-3ZM112 540h3V543h-3ZM116 524h3V541h-3ZM120 517h3V525h-3ZM128 522h3V536h-3ZM132 514h3V524h-3ZM140 512h3V536h-3ZM148 528h3V532h-3ZM160 567h3V576h-3ZM164 550h3V568h-3ZM176 590h3V604h-3ZM180 597h3V605h-3ZM184 588h3V598h-3ZM188 585h3V589h-3ZM196 574h3V598h-3ZM200 551h3V575h-3ZM204 545h3V553h-3ZM212 543h3V547h-3ZM228 584h3V588h-3ZM232 582h3V585h-3ZM248 599h3V607h-3ZM252 600h3V601h-3ZM256 591h3V601h-3ZM272 621h3V629h-3ZM280 618h3V623h-3ZM284 614h3V618h-3ZM288 602h3V615h-3ZM304 622h3V637h-3ZM308 610h3V623h-3ZM316 588h3V613h-3ZM324 584h3V590h-3ZM332 570h3V589h-3ZM336 547h3V571h-3ZM348 555h3V562h-3ZM364 578h3V581h-3ZM372 591h3V595h-3ZM388 607h3V618h-3ZM400 610h3V616h-3ZM404 601h3V610h-3ZM412 608h3V613h-3ZM420 607h3V615h-3ZM424 599h3V607h-3ZM428 592h3V600h-3ZM432 573h3V593h-3ZM440 600h3V609h-3ZM448 601h3V602h-3ZM460 598h3V619h-3ZM476 605h3V614h-3ZM484 586h3V614h-3ZM492 593h3V595h-3ZM496 586h3V594h-3ZM500 566h3V587h-3ZM512 601h3V608h-3ZM516 600h3V602h-3ZM524 600h3V608h-3ZM532 600h3V608h-3ZM540 586h3V600h-3ZM544 570h3V587h-3ZM552 547h3V572h-3ZM560 560h3V562h-3ZM564 548h3V561h-3ZM576 566h3V586h-3ZM592 578h3V584h-3ZM596 577h3V579h-3ZM600 572h3V578h-3ZM604 544h3V573h-3ZM612 545h3V548h-3ZM616 527h3V546h-3ZM624 539h3V548h-3ZM644 573h3V583h-3ZM648 569h3V574h-3ZM652 565h3V570h-3ZM660 556h3V563h-3ZM664 552h3V557h-3ZM672 550h3V561h-3ZM676 525h3V550h-3ZM684 538h3V540h-3ZM692 535h3V539h-3ZM696 522h3V536h-3ZM700 504h3V523h-3ZM708 498h3V506h-3ZM716 484h3V510h-3ZM728 499h3V503h-3ZM732 497h3V500h-3ZM744 499h3V511h-3ZM756 514h3V516h-3ZM760 513h3V515h-3ZM764 496h3V514h-3ZM768 495h3V497h-3ZM772 485h3V496h-3ZM780 492h3V498h-3ZM784 481h3V493h-3ZM788 472h3V482h-3ZM796 483h3V496h-3ZM800 478h3V484h-3ZM804 473h3V479h-3ZM812 480h3V489h-3ZM820 437h3V484h-3ZM824 431h3V438h-3ZM828 428h3V432h-3ZM832 424h3V429h-3ZM840 390h3V434h-3ZM852 407h3V408h-3ZM856 399h3V408h-3ZM860 394h3V400h-3ZM868 376h3V423h-3ZM876 379h3V393h-3ZM884 387h3V390h-3ZM888 379h3V388h-3ZM892 367h3V380h-3ZM896 356h3V368h-3ZM900 335h3V362h-3ZM904 325h3V336h-3ZM912 305h3V332h-3ZM916 302h3V306h-3ZM920 298h3V303h-3ZM924 289h3V299h-3ZM936 309h3V317h-3ZM940 308h3V310h-3ZM948 316h3V321h-3ZM952 311h3V317h-3ZM956 299h3V312h-3ZM964 285h3V304h-3ZM968 275h3V285h-3ZM984 283h3V305h-3ZM988 267h3V284h-3ZM992 242h3V268h-3ZM996 230h3V243h-3ZM1000 212h3V231h-3ZM1024 284h3V298h-3ZM1028 282h3V285h-3ZM1036 299h3V325h-3ZM1040 292h3V300h-3ZM1048 285h3V298h-3ZM1052 274h3V287h-3ZM1060 283h3V313h-3ZM1064 268h3V284h-3ZM1068 264h3V269h-3ZM1072 260h3V265h-3ZM1076 246h3V261h-3ZM1080 223h3V247h-3ZM1092 223h3V233h-3ZM1096 223h3V224h-3ZM1104 241h3V245h-3ZM1108 222h3V242h-3ZM1136 278h3V289h-3ZM1140 273h3V278h-3ZM1168 298h3V315h-3ZM1172 286h3V299h-3ZM1176 271h3V287h-3ZM1196 300h3V321h-3ZM1200 275h3V301h-3ZM1204 274h3V276h-3ZM1212 266h3V280h-3ZM1220 247h3V270h-3ZM1224 241h3V248h-3ZM1240 262h3V265h-3ZM1244 260h3V263h-3ZM1248 258h3V261h-3ZM1252 243h3V260h-3ZM1260 241h3V248h-3ZM1264 236h3V242h-3ZM1272 236h3V248h-3ZM1276 229h3V237h-3ZM1280 228h3V230h-3ZM1284 216h3V229h-3ZM1288 215h3V216h-3ZM1292 204h3V216h-3ZM1296 189h3V205h-3ZM1308 185h3V193h-3ZM1316 186h3V193h-3ZM1332 243h3V249h-3ZM1336 241h3V244h-3ZM1348 237h3V252h-3ZM1352 234h3V238h-3ZM1356 225h3V235h-3ZM1360 224h3V226h-3ZM1376 272h3V287h-3ZM1380 269h3V277h-3ZM1388 256h3V273h-3ZM1392 244h3V257h-3ZM1404 270h3V278h-3ZM1408 263h3V271h-3ZM1412 255h3V264h-3ZM1424 249h3V263h-3ZM1436 261h3V263h-3ZM1444 250h3V277h-3ZM1452 246h3V253h-3ZM1460 249h3V251h-3ZM1472 257h3V272h-3ZM1480 226h3V260h-3ZM1484 205h3V227h-3ZM1488 203h3V206h-3Z" fill="#00ff00" shape-rendering="crispEdges"/><path d="M9 590h1V606h-1ZM13 602h1V617h-1ZM17 609h1V619h-1ZM21 612h1V628h-1ZM37 539h1V548h-1ZM45 515h1V550h-1ZM49 539h1V576h-1ZM53 551h1V576h-1ZM57 566h1V578h-1ZM65 565h1V575h-1ZM73 561h1V585h-1ZM77 554h1V575h-1ZM89 562h1V575h-1ZM93 573h1V601h-1ZM105 536h1V548h-1ZM125 514h1V541h-1ZM137 509h1V540h-1ZM145 505h1V543h-1ZM153 528h1V573h-1ZM157 564h1V578h-1ZM169 549h1V569h-1ZM173 551h1V605h-1ZM193 584h1V601h-1ZM209 536h1V550h-1ZM217 541h1V568h-1ZM221 562h1V608h-1ZM225 582h1V591h-1ZM237 568h1V595h-1ZM241 588h1V611h-1ZM245 595h1V621h-1ZM261 588h1V606h-1ZM265 588h1V616h-1ZM269 605h1V630h-1ZM277 617h1V626h-1ZM293 599h1V644h-1ZM297 628h1V642h-1ZM301 632h1V644h-1ZM313 606h1V623h-1ZM321 585h1V594h-1ZM329 579h1V605h-1ZM341 536h1V562h-1ZM345 552h1V565h-1ZM353 550h1V560h-1ZM357 550h1V574h-1ZM361 558h1V584h-1ZM369 576h1V596h-1ZM377 589h1V601h-1ZM381 592h1V611h-1ZM385 604h1V631h-1ZM393 607h1V617h-1ZM397 610h1V620h-1ZM409 601h1V621h-1ZM417 601h1V614h-1ZM437 573h1V610h-1ZM445 593h1V605h-1ZM453 600h1V623h-1ZM457 612h1V630h-1ZM465 594h1V610h-1ZM469 603h1V609h-1ZM473 600h1V616h-1ZM481 604h1V634h-1ZM489 584h1V598h-1ZM505 566h1V586h-1ZM509 576h1V611h-1ZM521 595h1V608h-1ZM529 602h1V614h-1ZM537 594h1V602h-1ZM549 563h1V577h-1ZM557 538h1V563h-1ZM569 548h1V562h-1ZM573 555h1V588h-1ZM581 561h1V583h-1ZM585 566h1V584h-1ZM589 575h1V587h-1ZM609 540h1V549h-1ZM621 525h1V551h-1ZM629 536h1V575h-1ZM633 566h1V578h-1ZM637 571h1V583h-1ZM641 578h1V585h-1ZM657 561h1V569h-1ZM669 543h1V564h-1ZM681 521h1V541h-1ZM689 536h1V545h-1ZM705 503h1V515h-1ZM713 493h1V510h-1ZM721 478h1V492h-1ZM725 475h1V506h-1ZM737 496h1V507h-1ZM741 497h1V515h-1ZM749 481h1V507h-1ZM753 500h1V524h-1ZM777 480h1V489h-1ZM793 468h1V497h-1ZM809 465h1V493h-1ZM817 470h1V489h-1ZM837 420h1V444h-1ZM845 387h1V406h-1ZM849 398h1V411h-1ZM865 391h1V423h-1ZM873 373h1V395h-1ZM881 375h1V392h-1ZM909 318h1V336h-1ZM929 285h1V321h-1ZM933 305h1V330h-1ZM945 307h1V322h-1ZM961 296h1V319h-1ZM973 273h1V287h-1ZM977 278h1V291h-1ZM981 288h1V306h-1ZM1005 205h1V239h-1ZM1009 233h1V254h-1ZM1013 239h1V293h-1ZM1017 266h1V289h-1ZM1021 271h1V306h-1ZM1033 281h1V326h-1ZM1045 290h1V299h-1ZM1057 266h1V316h-1ZM1085 207h1V233h-1ZM1089 223h1V238h-1ZM1101 201h1V248h-1ZM1113 214h1V233h-1ZM1117 220h1V229h-1ZM1121 225h1V259h-1ZM1125 239h1V258h-1ZM1129 242h1V269h-1ZM1133 250h1V297h-1ZM1145 270h1V276h-1ZM1149 269h1V299h-1ZM1153 284h1V305h-1ZM1157 274h1V302h-1ZM1161 295h1V308h-1ZM1165 304h1V316h-1ZM1181 271h1V296h-1ZM1185 286h1V313h-1ZM1189 301h1V314h-1ZM1193 304h1V323h-1ZM1209 271h1V281h-1ZM1217 259h1V270h-1ZM1229 231h1V263h-1ZM1233 257h1V274h-1ZM1237 257h1V266h-1ZM1257 240h1V250h-1ZM1269 229h1V253h-1ZM1301 172h1V201h-1ZM1305 187h1V195h-1ZM1313 184h1V195h-1ZM1321 185h1V196h-1ZM1325 185h1V232h-1ZM1329 214h1V253h-1ZM1341 229h1V263h-1ZM1345 236h1V258h-1ZM1365 220h1V271h-1ZM1369 259h1V294h-1ZM1373 277h1V298h-1ZM1385 266h1V280h-1ZM1397 243h1V275h-1ZM1401 266h1V280h-1ZM1417 244h1V268h-1ZM1421 243h1V267h-1ZM1429 246h1V254h-1ZM1433 249h1V264h-1ZM1441 254h1V287h-1ZM1449 246h1V262h-1ZM1457 240h1V255h-1ZM1465 246h1V274h-1ZM1469 210h1V293h-1ZM1477 255h1V264h-1ZM8 602h3V605h-3ZM12 604h3V611h-3ZM16 611h3V615h-3ZM20 615h3V621h-3ZM36 542h3V547h-3ZM44 537h3V547h-3ZM48 546h3V568h-3ZM52 568h3V571h-3ZM56 571h3V574h-3ZM64 566h3V573h-3ZM72 565h3V568h-3ZM76 568h3V571h-3ZM88 562h3V573h-3ZM92 574h3V588h-3ZM104 540h3V542h-3ZM124 518h3V535h-3ZM136 514h3V535h-3ZM144 512h3V532h-3ZM152 528h3V566h-3ZM156 566h3V575h-3ZM168 550h3V563h-3ZM172 563h3V604h-3ZM192 585h3V596h-3ZM208 545h3V546h-3ZM216 543h3V562h-3ZM220 563h3V584h-3ZM224 584h3V588h-3ZM236 582h3V591h-3ZM240 590h3V602h-3ZM244 602h3V606h-3ZM260 591h3V595h-3ZM264 595h3V608h-3ZM268 608h3V628h-3ZM276 621h3V623h-3ZM292 602h3V628h-3ZM296 628h3V638h-3ZM300 634h3V637h-3ZM312 610h3V612h-3ZM320 588h3V589h-3ZM328 584h3V589h-3ZM340 547h3V561h-3ZM344 560h3V562h-3ZM352 555h3V556h-3ZM356 556h3V564h-3ZM360 564h3V580h-3ZM368 578h3V594h-3ZM376 591h3V595h-3ZM380 595h3V607h-3ZM384 607h3V617h-3ZM392 608h3V614h-3ZM396 614h3V615h-3ZM408 601h3V613h-3ZM416 608h3V613h-3ZM436 574h3V608h-3ZM444 600h3V601h-3ZM452 601h3V614h-3ZM456 614h3V619h-3ZM464 598h3V602h-3ZM468 604h3V605h-3ZM472 605h3V614h-3ZM480 605h3V614h-3ZM488 586h3V594h-3ZM504 566h3V586h-3ZM508 586h3V608h-3ZM520 600h3V608h-3ZM528 604h3V608h-3ZM536 599h3V601h-3ZM548 570h3V571h-3ZM556 547h3V561h-3ZM568 549h3V559h-3ZM572 558h3V587h-3ZM580 566h3V572h-3ZM584 571h3V582h-3ZM588 582h3V584h-3ZM608 544h3V548h-3ZM620 526h3V549h-3ZM628 539h3V571h-3ZM632 570h3V575h-3ZM636 574h3V580h-3ZM640 579h3V583h-3ZM656 565h3V567h-3ZM668 552h3V561h-3ZM680 525h3V540h-3ZM688 538h3V539h-3ZM704 504h3V506h-3ZM712 498h3V510h-3ZM720 484h3V485h-3ZM724 485h3V502h-3ZM736 497h3V503h-3ZM740 503h3V510h-3ZM748 499h3V501h-3ZM752 500h3V517h-3ZM776 485h3V488h-3ZM792 472h3V496h-3ZM808 473h3V488h-3ZM816 480h3V484h-3ZM836 424h3V434h-3ZM844 390h3V402h-3ZM848 402h3V407h-3ZM864 394h3V422h-3ZM872 376h3V390h-3ZM880 379h3V390h-3ZM908 326h3V332h-3ZM928 289h3V310h-3ZM932 310h3V316h-3ZM944 308h3V320h-3ZM960 298h3V303h-3ZM972 275h3V281h-3ZM976 281h3V289h-3ZM980 288h3V305h-3ZM1004 213h3V235h-3ZM1008 235h3V244h-3ZM1012 243h3V275h-3ZM1016 275h3V287h-3ZM1020 286h3V298h-3ZM1032 282h3V325h-3ZM1044 292h3V298h-3ZM1056 274h3V313h-3ZM1084 223h3V227h-3ZM1088 226h3V233h-3ZM1100 223h3V245h-3ZM1112 222h3V224h-3ZM1116 224h3V227h-3ZM1120 226h3V249h-3ZM1124 249h3V250h-3ZM1128 250h3V252h-3ZM1132 252h3V288h-3ZM1144 273h3V275h-3ZM1148 275h3V287h-3ZM1152 286h3V288h-3ZM1156 289h3V298h-3ZM1160 297h3V307h-3ZM1164 306h3V315h-3ZM1180 271h3V286h-3ZM1184 286h3V306h-3ZM1188 305h3V308h-3ZM1192 308h3V320h-3ZM1208 275h3V280h-3ZM1216 266h3V270h-3ZM1228 241h3V259h-3ZM1232 259h3V263h-3ZM1236 262h3V264h-3ZM1256 244h3V247h-3ZM1268 236h3V248h-3ZM1300 189h3V190h-3ZM1304 189h3V193h-3ZM1312 185h3V193h-3ZM1320 186h3V193h-3ZM1324 192h3V225h-3ZM1328 224h3V248h-3ZM1340 241h3V248h-3ZM1344 248h3V252h-3ZM1364 224h3V263h-3ZM1368 262h3V278h-3ZM1372 278h3V287h-3ZM1384 272h3V273h-3ZM1396 245h3V270h-3ZM1400 270h3V278h-3ZM1416 256h3V260h-3ZM1420 260h3V262h-3ZM1428 249h3V253h-3ZM1432 252h3V263h-3ZM1440 261h3V276h-3ZM1448 250h3V252h-3ZM1456 246h3V251h-3ZM1464 250h3V251h-3ZM1468 250h3V272h-3ZM1476 257h3V260h-3Z" fill="#808080" shape-rendering="crispEdges"/><path d="M9 603h1V604h-1ZM13 605h1V610h-1ZM17 612h1V614h-1ZM21 616h1V620h-1ZM37 543h1V546h-1ZM45 538h1V546h-1ZM49 547h1V567h-1ZM53 569h1V570h-1ZM57 572h1V573h-1ZM65 567h1V572h-1ZM73 566h1V567h-1ZM77 569h1V570h-1ZM89 563h1V572h-1ZM93 575h1V587h-1ZM125 519h1V534h-1ZM137 515h1V534h-1ZM145 513h1V531h-1ZM153 529h1V565h-1ZM157 567h1V574h-1ZM169 551h1V562h-1ZM173 564h1V603h-1ZM193 586h1V595h-1ZM217 544h1V561h-1ZM221 564h1V583h-1ZM225 585h1V587h-1ZM237 583h1V590h-1ZM241 591h1V601h-1ZM245 603h1V605h-1ZM261 592h1V594h-1ZM265 596h1V607h-1ZM269 609h1V627h-1ZM293 603h1V627h-1ZM297 629h1V637h-1ZM301 635h1V636h-1ZM329 585h1V588h-1ZM341 548h1V560h-1ZM357 557h1V563h-1ZM361 565h1V579h-1ZM369 579h1V593h-1ZM377 592h1V594h-1ZM381 596h1V606h-1ZM385 608h1V616h-1ZM393 609h1V613h-1ZM409 602h1V612h-1ZM417 609h1V612h-1ZM437 575h1V607h-1ZM453 602h1V613h-1ZM457 615h1V618h-1ZM465 599h1V601h-1ZM473 606h1V613h-1ZM481 606h1V613h-1ZM489 587h1V593h-1ZM505 567h1V585h-1ZM509 587h1V607h-1ZM521 601h1V607h-1ZM529 605h1V607h-1ZM557 548h1V560h-1ZM569 550h1V558h-1ZM573 559h1V586h-1ZM581 567h1V571h-1ZM585 572h1V581h-1ZM609 545h1V547h-1ZM621 527h1V548h-1ZM629 540h1V570h-1ZM633 571h1V574h-1ZM637 575h1V579h-1ZM641 580h1V582h-1ZM669 553h1V560h-1ZM681 526h1V539h-1ZM713 499h1V509h-1ZM725 486h1V501h-1ZM737 498h1V502h-1ZM741 504h1V509h-1ZM753 501h1V516h-1ZM777 486h1V487h-1ZM793 473h1V495h-1ZM809 474h1V487h-1ZM817 481h1V483h-1ZM837 425h1V433h-1ZM845 391h1V401h-1ZM849 403h1V406h-1ZM865 395h1V421h-1ZM873 377h1V389h-1ZM881 380h1V389h-1ZM909 327h1V331h-1ZM929 290h1V309h-1ZM933 311h1V315h-1ZM945 309h1V319h-1ZM961 299h1V302h-1ZM973 276h1V280h-1ZM977 282h1V288h-1ZM981 289h1V304h-1ZM1005 214h1V234h-1ZM1009 236h1V243h-1ZM1013 244h1V274h-1ZM1017 276h1V286h-1ZM1021 287h1V297h-1ZM1033 283h1V324h-1ZM1045 293h1V297h-1ZM1057 275h1V312h-1ZM1085 224h1V226h-1ZM1089 227h1V232h-1ZM1101 224h1V244h-1ZM1117 225h1V226h-1ZM1121 227h1V248h-1ZM1133 253h1V287h-1ZM1149 276h1V286h-1ZM1157 290h1V297h-1ZM1161 298h1V306h-1ZM1165 307h1V314h-1ZM1181 272h1V285h-1ZM1185 287h1V305h-1ZM1189 306h1V307h-1ZM1193 309h1V319h-1ZM1209 276h1V279h-1ZM1217 267h1V269h-1ZM1229 242h1V258h-1ZM1233 260h1V262h-1ZM1257 245h1V246h-1ZM1269 237h1V247h-1ZM1305 190h1V192h-1ZM1313 186h1V192h-1ZM1321 187h1V192h-1ZM1325 193h1V224h-1ZM1329 225h1V247h-1ZM1341 242h1V247h-1ZM1345 249h1V251h-1ZM1365 225h1V262h-1ZM1369 263h1V277h-1ZM1373 279h1V286h-1ZM1397 246h1V269h-1ZM1401 271h1V277h-1ZM1417 257h1V259h-1ZM1429 250h1V252h-1ZM1433 253h1V262h-1ZM1441 262h1V275h-1ZM1457 247h1V250h-1ZM1469 251h1V271h-1ZM1477 258h1V259h-1Z" fill="#000" shape-rendering="crispEdges"/><polyline points="5.0,654.6 12.7,647.2 23.3,639.8 31.7,623.9 40.2,609.1 47.6,600.2 57.1,594.3 72.0,585.8 84.7,582.0 93.1,581.2 101.6,576.3 114.3,566.3 127.0,556.2 139.7,547.7 148.1,543.5 156.6,546.0 169.3,550.9 182.0,560.0 192.6,568.5 197.7,569.5 205.4,565.4 213.0,562.3 217.7,562.3 223.8,564.6 236.2,570.0 243.8,576.2 254.6,581.5 263.8,583.8 273.0,590.8 282.3,596.6 291.5,598.5 297.7,604.6 306.9,609.5 313.0,608.9 320.8,605.4 328.5,602.8 334.6,598.5 340.8,592.3 348.5,586.2 356.2,581.8 363.8,581.2 371.5,582.8 379.2,584.6 389.2,591.5 400.0,595.7 410.8,597.7 421.5,600.8 427.7,599.2 433.8,597.7 441.5,598.8 450.8,599.7 460.0,602.8 472.3,603.1 481.5,604.3 490.8,602.3 500.0,597.7 506.2,596.2 515.4,597.7 527.7,600.3 536.9,599.7 543.0,596.9 549.2,592.3 558.5,585.4 567.7,579.7 575.0,579.0 585.4,578.5 600.8,578.2 608.5,573.1 616.2,567.7 623.8,562.8 628.5,562.3 634.6,564.6 642.3,567.4 653.0,566.9 662.3,565.8 671.5,563.8 680.8,558.5 693.0,553.5 697.7,550.8 705.4,543.8 714.6,535.4 723.8,526.2 733.0,520.8 742.3,517.2 751.5,514.2 760.8,514.2 772.3,509.2 780.0,506.2 787.7,501.5 796.9,498.5 804.6,494.6 812.3,493.4 818.5,491.5 824.6,483.8 832.3,474.6 838.5,468.5 843.0,460.0 849.2,453.0 855.4,446.2 861.5,438.9 866.2,436.9 870.8,430.8 876.9,423.8 883.0,418.5 889.2,414.6 895.4,407.7 898.5,403.8 904.6,393.8 910.0,385.7 917.0,370.0 923.8,359.2 933.0,350.0 942.3,342.3 951.5,337.7 960.8,330.8 970.0,320.8 976.2,315.4 983.8,312.3 990.0,306.2 996.2,296.2 1000.8,287.7 1006.9,280.8 1010.0,279.2 1017.7,279.2 1025.4,280.8 1030.0,283.8 1037.7,286.6 1046.9,288.5 1057.7,289.2 1066.9,284.6 1076.2,280.0 1086.9,268.5 1097.7,258.5 1105.4,256.5 1116.2,248.8 1122.3,248.2 1129.2,248.2 1137.7,253.8 1148.5,259.2 1156.2,265.4 1165.4,273.8 1173.0,277.4 1179.2,276.9 1188.5,283.0 1197.7,287.7 1205.4,285.7 1214.6,283.0 1223.8,276.9 1233.0,272.8 1242.3,271.2 1250.0,269.2 1257.7,264.6 1268.5,260.0 1277.7,255.4 1286.9,249.2 1296.2,240.8 1303.0,232.0 1309.2,225.4 1318.5,217.0 1323.0,216.2 1330.8,221.0 1340.0,225.4 1349.2,229.2 1361.5,229.7 1367.7,233.8 1377.0,243.0 1386.2,248.5 1395.4,250.0 1404.6,255.4 1416.9,256.2 1432.3,255.8 1443.0,258.5 1453.8,256.2 1464.6,254.3 1470.8,256.5 1476.9,255.8 1483.0,252.3 1489.0,246.2" fill="none" stroke="#66733a" stroke-width="1" stroke-linejoin="round" shape-rendering="crispEdges"/><polyline points="59.0,701.0 62.4,699.0 84.7,687.4 105.8,672.6 127.0,657.8 148.1,644.7 169.3,636.6 190.0,632.6 205.4,626.2 220.8,622.3 236.2,620.0 254.6,617.7 276.2,617.7 300.8,618.5 313.0,618.5 328.5,614.6 343.8,611.5 359.2,607.7 368.5,606.2 380.0,606.5 395.4,607.4 410.8,607.4 426.2,606.9 441.5,605.4 466.2,606.2 487.7,606.2 500.0,604.6 536.9,604.3 549.2,601.5 564.6,598.5 575.0,597.0 590.0,596.2 613.0,592.3 623.8,588.5 650.0,587.4 674.6,583.8 693.0,579.7 708.5,574.6 723.8,568.5 739.2,562.8 754.6,559.2 770.0,555.4 790.8,547.7 818.5,540.0 840.0,527.7 867.7,512.3 898.5,492.3 929.2,464.6 950.8,447.7 972.3,432.9 987.7,423.0 1009.2,404.6 1027.7,393.8 1043.0,387.7 1073.8,372.3 1098.5,355.4 1107.0,349.2 1122.3,341.5 1137.7,336.2 1153.0,332.3 1168.5,330.0 1185.4,326.6 1200.8,323.8 1216.2,319.5 1231.5,315.4 1246.9,311.5 1262.3,306.9 1277.7,302.0 1293.0,295.4 1300.0,291.5 1310.8,285.4 1321.5,280.8 1338.5,277.7 1358.5,273.4 1386.2,273.0 1407.7,272.3 1423.0,271.5 1438.5,270.3 1453.8,269.2 1463.0,268.2 1476.9,267.7 1484.6,266.2 1489.0,264.2" fill="none" stroke="#ff4500" stroke-width="1" stroke-linejoin="round" shape-rendering="crispEdges"/><polyline points="157.0,701.0 163.0,699.0 200.0,689.5 250.0,678.0 300.0,668.0 347.0,659.0 380.0,653.0 395.4,651.5 410.8,650.0 430.8,647.4 463.0,644.3 503.0,639.2 533.8,637.7 549.2,635.4 564.6,632.3 580.0,629.5 612.0,624.5 647.0,619.2 677.7,613.8 700.8,610.0 723.8,603.8 739.2,599.2 754.6,596.2 770.0,593.0 790.8,586.8 821.5,578.5 867.7,561.5 913.8,538.5 944.6,521.5 975.4,505.5 1006.2,486.2 1030.8,473.8 1067.7,458.5 1083.0,450.2 1113.8,432.9 1138.5,423.0 1160.8,415.0 1181.7,408.8 1202.5,403.5 1223.3,396.2 1244.2,389.0 1265.0,382.7 1285.8,375.0 1306.7,365.0 1323.3,358.3 1340.0,353.5 1369.2,346.2 1390.0,342.0 1410.8,339.0 1431.7,334.2 1452.5,330.0 1473.3,326.5 1483.8,324.4 1489.0,322.3" fill="none" stroke="#ffff00" stroke-width="1" stroke-linejoin="round" shape-rendering="crispEdges"/><path d="M5 202.5H1872" stroke="#778899" stroke-width="1" shape-rendering="crispEdges"/><path d="M197 170.5H1872" stroke="#32cd32" stroke-width="1" stroke-dasharray="9 6 2 7" shape-rendering="crispEdges"/><path d="M5 170.5H6" stroke="#32cd32" stroke-width="1" shape-rendering="crispEdges"/><rect x="1279.75" y="158.75" width="293.5" height="22.5" fill="none" stroke="#ed1c24" stroke-width="7.5"/><path d="M1873 104.5h2M1873 137.5h2M1873 170.5h2M1873 236.5h2M1873 269.5h2M1873 302.5h2M1873 335.5h2M1873 368.5h2M1873 401.5h2M1873 434.5h2M1873 467.5h2M1873 500.5h2M1873 533.5h2M1873 566.5h2M1873 599.5h2M1873 632.5h2M1873 665.5h2M1873 698.5h2M5.5 702v3M69.5 702v3M133.5 702v3M197.5 702v3M261.5 702v3M325.5 702v3M389.5 702v3M453.5 702v3M517.5 702v3M581.5 702v3M645.5 702v3M709.5 702v3M773.5 702v3M837.5 702v3M901.5 702v3M965.5 702v3M1029.5 702v3M1093.5 702v3M1157.5 702v3M1221.5 702v3M1285.5 702v3M1349.5 702v3M1413.5 702v3M1477.5 702v3" stroke="#fff" stroke-width="1" shape-rendering="crispEdges"/><path d="M1493 102h8l-4 4z" fill="#778899"/></svg>
<span style="position:absolute;left:1878.00px;top:97.87px;font-size:9.6px;line-height:13px;color:#fff;white-space:pre;transform-origin:0 0;transform:scaleX(0.9366);">1.20795</span>
<span style="position:absolute;left:1878.00px;top:130.87px;font-size:9.6px;line-height:13px;color:#fff;white-space:pre;transform-origin:0 0;transform:scaleX(0.9366);">1.20240</span>
<span style="position:absolute;left:1878.00px;top:163.87px;font-size:9.6px;line-height:13px;color:#fff;white-space:pre;transform-origin:0 0;transform:scaleX(0.9366);">1.19670</span>
<span style="position:absolute;left:1878.00px;top:229.87px;font-size:9.6px;line-height:13px;color:#fff;white-space:pre;transform-origin:0 0;transform:scaleX(0.9366);">1.18560</span>
<span style="position:absolute;left:1878.00px;top:262.87px;font-size:9.6px;line-height:13px;color:#fff;white-space:pre;transform-origin:0 0;transform:scaleX(0.9366);">1.18005</span>
<span style="position:absolute;left:1878.00px;top:295.87px;font-size:9.6px;line-height:13px;color:#fff;white-space:pre;transform-origin:0 0;transform:scaleX(0.9366);">1.17450</span>
<span style="position:absolute;left:1878.00px;top:328.87px;font-size:9.6px;line-height:13px;color:#fff;white-space:pre;transform-origin:0 0;transform:scaleX(0.9366);">1.16880</span>
<span style="position:absolute;left:1878.00px;top:361.87px;font-size:9.6px;line-height:13px;color:#fff;white-space:pre;transform-origin:0 0;transform:scaleX(0.9366);">1.16325</span>
<span style="position:absolute;left:1878.00px;top:394.87px;font-size:9.6px;line-height:13px;color:#fff;white-space:pre;transform-origin:0 0;transform:scaleX(0.9366);">1.15770</span>
<span style="position:absolute;left:1878.00px;top:427.87px;font-size:9.6px;line-height:13px;color:#fff;white-space:pre;transform-origin:0 0;transform:scaleX(0.9366);">1.15215</span>
<span style="position:absolute;left:1878.00px;top:460.87px;font-size:9.6px;line-height:13px;color:#fff;white-space:pre;transform-origin:0 0;transform:scaleX(0.9366);">1.14645</span>
<span style="position:absolute;left:1878.00px;top:493.87px;font-size:9.6px;line-height:13px;color:#fff;white-space:pre;transform-origin:0 0;transform:scaleX(0.9366);">1.14090</span>
<span style="position:absolute;left:1878.00px;top:526.87px;font-size:9.6px;line-height:13px;color:#fff;white-space:pre;transform-origin:0 0;transform:scaleX(0.9366);">1.13535</span>
<span style="position:absolute;left:1878.00px;top:559.87px;font-size:9.6px;line-height:13px;color:#fff;white-space:pre;transform-origin:0 0;transform:scaleX(0.9366);">1.12980</span>
<span style="position:absolute;left:1878.00px;top:592.87px;font-size:9.6px;line-height:13px;color:#fff;white-space:pre;transform-origin:0 0;transform:scaleX(0.9366);">1.12410</span>
<span style="position:absolute;left:1878.00px;top:625.87px;font-size:9.6px;line-height:13px;color:#fff;white-space:pre;transform-origin:0 0;transform:scaleX(0.9562);">1.11855</span>
<span style="position:absolute;left:1878.00px;top:658.87px;font-size:9.6px;line-height:13px;color:#fff;white-space:pre;transform-origin:0 0;transform:scaleX(0.9562);">1.11300</span>
<span style="position:absolute;left:1878.00px;top:691.87px;font-size:9.6px;line-height:13px;color:#fff;white-space:pre;transform-origin:0 0;transform:scaleX(0.9366);">1.10745</span>
<div style="position:absolute;left:1874px;top:197px;width:41px;height:11px;background:#fff;"></div>
<span style="position:absolute;left:1878.00px;top:195.87px;font-size:9.6px;line-height:13px;color:#000;white-space:pre;transform-origin:0 0;transform:scaleX(0.9366);">1.19132</span>
<span style="position:absolute;left:4.00px;top:703.83px;font-size:10px;line-height:14px;color:#fff;white-space:pre;transform-origin:0 0;transform:scaleX(0.9181);">3 Jun 2020</span>
<span style="position:absolute;left:68.00px;top:703.83px;font-size:10px;line-height:14px;color:#fff;white-space:pre;transform-origin:0 0;transform:scaleX(0.9181);">8 Jun 08:00</span>
<span style="position:absolute;left:132.00px;top:703.83px;font-size:10px;line-height:14px;color:#fff;white-space:pre;transform-origin:0 0;transform:scaleX(0.9181);">11 Jun 00:00</span>
<span style="position:absolute;left:196.00px;top:703.83px;font-size:10px;line-height:14px;color:#fff;white-space:pre;transform-origin:0 0;transform:scaleX(0.9181);">15 Jun 16:00</span>
<span style="position:absolute;left:260.00px;top:703.83px;font-size:10px;line-height:14px;color:#fff;white-space:pre;transform-origin:0 0;transform:scaleX(0.9181);">18 Jun 08:00</span>
<span style="position:absolute;left:324.00px;top:703.83px;font-size:10px;line-height:14px;color:#fff;white-space:pre;transform-origin:0 0;transform:scaleX(0.9181);">23 Jun 00:00</span>
<span style="position:absolute;left:388.00px;top:703.83px;font-size:10px;line-height:14px;color:#fff;white-space:pre;transform-origin:0 0;transform:scaleX(0.9181);">25 Jun 16:00</span>
<span style="position:absolute;left:452.00px;top:703.83px;font-size:10px;line-height:14px;color:#fff;white-space:pre;transform-origin:0 0;transform:scaleX(0.9181);">30 Jun 08:00</span>
<span style="position:absolute;left:516.00px;top:703.83px;font-size:10px;line-height:14px;color:#fff;white-space:pre;transform-origin:0 0;transform:scaleX(0.9181);">3 Jul 00:00</span>
<span style="position:absolute;left:580.00px;top:703.83px;font-size:10px;line-height:14px;color:#fff;white-space:pre;transform-origin:0 0;transform:scaleX(0.9181);">7 Jul 16:00</span>
<span style="position:absolute;left:644.00px;top:703.83px;font-size:10px;line-height:14px;color:#fff;white-space:pre;transform-origin:0 0;transform:scaleX(0.9181);">10 Jul 08:00</span>
<span style="position:absolute;left:708.00px;top:703.83px;font-size:10px;line-height:14px;color:#fff;white-space:pre;transform-origin:0 0;transform:scaleX(0.9181);">15 Jul 00:00</span>
<span style="position:absolute;left:772.00px;top:703.83px;font-size:10px;line-height:14px;color:#fff;white-space:pre;transform-origin:0 0;transform:scaleX(0.9181);">17 Jul 16:00</span>
<span style="position:absolute;left:836.00px;top:703.83px;font-size:10px;line-height:14px;color:#fff;white-space:pre;transform-origin:0 0;transform:scaleX(0.9181);">22 Jul 08:00</span>
<span style="position:absolute;left:900.00px;top:703.83px;font-size:10px;line-height:14px;color:#fff;white-space:pre;transform-origin:0 0;transform:scaleX(0.9181);">27 Jul 00:00</span>
<span style="position:absolute;left:964.00px;top:703.83px;font-size:10px;line-height:14px;color:#fff;white-space:pre;transform-origin:0 0;transform:scaleX(0.9181);">29 Jul 16:00</span>
<span style="position:absolute;left:1028.00px;top:703.83px;font-size:10px;line-height:14px;color:#fff;white-space:pre;transform-origin:0 0;transform:scaleX(0.9181);">3 Aug 08:00</span>
<span style="position:absolute;left:1092.00px;top:703.83px;font-size:10px;line-height:14px;color:#fff;white-space:pre;transform-origin:0 0;transform:scaleX(0.9181);">6 Aug 00:00</span>
<span style="position:absolute;left:1156.00px;top:703.83px;font-size:10px;line-height:14px;color:#fff;white-space:pre;transform-origin:0 0;transform:scaleX(0.9181);">10 Aug 16:00</span>
<span style="position:absolute;left:1220.00px;top:703.83px;font-size:10px;line-height:14px;color:#fff;white-space:pre;transform-origin:0 0;transform:scaleX(0.9181);">13 Aug 08:00</span>
<span style="position:absolute;left:1284.00px;top:703.83px;font-size:10px;line-height:14px;color:#fff;white-space:pre;transform-origin:0 0;transform:scaleX(0.9181);">18 Aug 00:00</span>
<span style="position:absolute;left:1348.00px;top:703.83px;font-size:10px;line-height:14px;color:#fff;white-space:pre;transform-origin:0 0;transform:scaleX(0.9181);">20 Aug 16:00</span>
<span style="position:absolute;left:1412.00px;top:703.83px;font-size:10px;line-height:14px;color:#fff;white-space:pre;transform-origin:0 0;transform:scaleX(0.9181);">25 Aug 08:00</span>
<span style="position:absolute;left:1476.00px;top:703.83px;font-size:10px;line-height:14px;color:#fff;white-space:pre;transform-origin:0 0;transform:scaleX(0.9181);">28 Aug 00:00</span>
<svg style="position:absolute;left:8px;top:105px" width="9" height="6"><path d="M0 5.5L4 1L8 5.5Z" fill="#fff"/></svg>
<span style="position:absolute;left:20.00px;top:103.67px;font-size:9.6px;line-height:13px;color:#fff;white-space:pre;transform-origin:0 0;transform:scaleX(0.9682);">EURUSD,H4  1.19087 1.19192 1.18850 1.19132</span>
<div style="position:absolute;left:8px;top:119px;width:46px;height:23px;background:linear-gradient(#fb5050,#ee3c3c);"></div>
<div style="position:absolute;left:155px;top:119px;width:47px;height:23px;background:linear-gradient(#fb5050,#ee3c3c);"></div>
<div style="position:absolute;left:8px;top:142px;width:96px;height:33px;background:linear-gradient(#e63232 0%,#cc1818 50%,#b00606 100%);"></div>
<div style="position:absolute;left:106px;top:142px;width:96px;height:33px;background:linear-gradient(#e63232 0%,#cc1818 50%,#b00606 100%);"></div>
<div style="position:absolute;left:12px;top:141px;width:38px;height:1px;background:#ff9c9c;"></div>
<div style="position:absolute;left:158px;top:141px;width:38px;height:1px;background:#ff9c9c;"></div>
<span style="position:absolute;left:18.00px;top:121.72px;font-size:12.5px;line-height:16px;color:#fff;white-space:pre;transform-origin:0 0;transform:scaleX(0.7685);">SELL</span>
<span style="position:absolute;left:166.00px;top:121.72px;font-size:12.5px;line-height:16px;color:#fff;white-space:pre;transform-origin:0 0;transform:scaleX(0.8754);">BUY</span>
<div style="position:absolute;left:54px;top:119px;width:101px;height:22px;background:#000;"></div>
<div style="position:absolute;left:56px;top:120px;width:19px;height:19px;background:linear-gradient(#f6f6f6,#dadada);"></div>
<div style="position:absolute;left:76px;top:120px;width:57px;height:19px;background:#fff;"></div>
<div style="position:absolute;left:134px;top:120px;width:19px;height:19px;background:linear-gradient(#f6f6f6,#dadada);"></div>
<div style="position:absolute;left:75px;top:120px;width:1px;height:19px;background:#a8a8b0;"></div>
<div style="position:absolute;left:133px;top:120px;width:1px;height:19px;background:#a8a8b0;"></div>
<svg style="position:absolute;left:62px;top:127px" width="8" height="5"><path d="M0 0h7L3.500 4z" fill="#000"/></svg>
<svg style="position:absolute;left:139px;top:126px" width="8" height="5"><path d="M0 4h7L3.500 0z" fill="#000"/></svg>
<span style="position:absolute;right:1790.50px;top:121.24px;font-size:12px;line-height:16px;color:#000;white-space:pre;letter-spacing:-0.589px;">0.45</span>
<span style="position:absolute;left:22.50px;top:156.84px;font-size:12px;line-height:16px;color:#fff;white-space:pre;letter-spacing:-0.014px;font-weight:bold;">1.19</span>
<span style="position:absolute;left:51.50px;top:141.06px;font-size:31px;line-height:35px;color:#fff;white-space:pre;transform-origin:0 0;transform:scaleX(0.9280);">13</span>
<span style="position:absolute;left:87.00px;top:142.07px;font-size:11.5px;line-height:15px;color:#fff;white-space:pre;">2</span>
<span style="position:absolute;left:120.50px;top:156.84px;font-size:12px;line-height:16px;color:#fff;white-space:pre;letter-spacing:-0.014px;font-weight:bold;">1.19</span>
<span style="position:absolute;left:148.50px;top:141.06px;font-size:31px;line-height:35px;color:#fff;white-space:pre;transform-origin:0 0;transform:scaleX(0.9570);">14</span>
<span style="position:absolute;left:184.50px;top:142.07px;font-size:11.5px;line-height:15px;color:#fff;white-space:pre;">5</span>
<div style="position:absolute;left:914px;top:123px;width:100px;height:26px;background:#fff;"></div>
<div style="position:absolute;left:915px;top:124px;width:98px;height:24px;background:#a0a0a0;"></div>
<div style="position:absolute;left:916px;top:125px;width:96px;height:22px;background:#f0f0f0;"></div>
<div style="position:absolute;left:919px;top:126px;width:54.5px;height:20px;overflow:hidden">
<span style="position:absolute;left:1px;top:1px;font-size:12px;line-height:20px;white-space:pre;letter-spacing:0.5px">Position Size</span></div>
<svg style="position:absolute;left:976px;top:130px" width="12" height="12"><path d="M3.5 3.5v-2h7v7h-2" fill="none" stroke="#8a8a8a"/><path d="M3 2h8" stroke="#8a8a8a"/><rect x="1.5" y="4.5" width="7" height="6" fill="#f0f0f0" stroke="#8a8a8a"/><path d="M1 5h8" stroke="#8a8a8a"/></svg>
<svg style="position:absolute;left:996px;top:131px" width="11" height="11"><path d="M1.5 1.5l8 8M9.5 1.5l-8 8" stroke="#8a8a8a" stroke-width="2.2"/></svg>
<div style="position:absolute;left:1839px;top:667px;width:80px;height:20px;background:#fff;border:1px solid #767676;box-sizing:border-box;box-shadow:2px 2px 2px rgba(0,0,0,.4)"></div>
<span style="position:absolute;left:1845.00px;top:669.64px;font-size:12px;line-height:16px;color:#575757;white-space:pre;letter-spacing:-0.264px;">Vertical scale</span>
<div style="position:absolute;left:0px;top:722px;width:1920px;height:2px;background:#fff;"></div>
<div style="position:absolute;left:0px;top:724px;width:1920px;height:1px;background:#000;"></div>
<div style="position:absolute;left:0px;top:725px;width:1920px;height:20px;background:#f0f0f0;"></div>
<div style="position:absolute;left:6px;top:724px;width:84px;height:19px;background:#000;"></div>
<div style="position:absolute;left:7px;top:722px;width:82px;height:20px;background:#fff;"></div>
<div style="position:absolute;left:90px;top:726px;width:1px;height:17px;background:#a0a0a0;"></div>
<span style="position:absolute;left:17.80px;top:726.14px;font-size:12px;line-height:16px;color:#000;white-space:pre;letter-spacing:-0.983px;">EURUSD,H4</span>
<span style="position:absolute;left:100.00px;top:726.14px;font-size:12px;line-height:16px;color:#6d6d6d;white-space:pre;letter-spacing:-0.878px;">GER30,H4</span>
<span style="position:absolute;left:171.70px;top:726.14px;font-size:12px;line-height:16px;color:#6d6d6d;white-space:pre;letter-spacing:-0.576px;">XAUUSD,H4</span>
<span style="position:absolute;left:256.50px;top:726.14px;font-size:12px;line-height:16px;color:#6d6d6d;white-space:pre;letter-spacing:-0.376px;">USOil,H4</span>
<div style="position:absolute;left:162px;top:727px;width:1px;height:14px;background:#6d6d6d;"></div>
<div style="position:absolute;left:246px;top:727px;width:1px;height:14px;background:#6d6d6d;"></div>
<div style="position:absolute;left:314px;top:727px;width:1px;height:14px;background:#6d6d6d;"></div>
<svg style="position:absolute;left:1885px;top:728px" width="30" height="10"><path d="M5 0v9L0.500 4.500zM20 0v9l4.500-4.500z" fill="#9a9a9a"/></svg>
<div style="position:absolute;left:0px;top:745px;width:1920px;height:1px;background:#fff;"></div>
<div style="position:absolute;left:0px;top:725px;width:2px;height:19px;background:#a8a8a8;"></div>
<div style="position:absolute;left:2px;top:725px;width:3px;height:19px;background:#e4e4e4;"></div>
<svg style="position:absolute;left:3px;top:749px" width="9" height="9"><path d="M1.500 2l5 4.600M6.500 2l-5 4.600" stroke="#000" stroke-width="1.800"/></svg>
<div style="position:absolute;left:1px;top:762px;width:13px;height:252px;background:linear-gradient(#d3e0ee,#c3d3e6);"></div>
<span style="position:absolute;left:1.5px;top:1012px;width:50px;height:14px;transform-origin:0 0;transform:rotate(-90deg) scaleX(0.915);font-size:12px;line-height:14px;white-space:pre">Navigator</span>
<div style="position:absolute;left:15px;top:747px;width:299px;height:1px;background:#c8c8c8;"></div>
<div style="position:absolute;left:15px;top:748px;width:299px;height:1px;background:#828282;"></div>
<div style="position:absolute;left:15px;top:748px;width:1px;height:244px;background:#828282;"></div>
<div style="position:absolute;left:16px;top:749px;width:297px;height:242px;background:#fff;"></div>
<div style="position:absolute;left:313px;top:748px;width:1px;height:244px;background:#fff;"></div>
<div style="position:absolute;left:296px;top:749px;width:17px;height:242px;background:#f0f0f0;"></div>
<div style="position:absolute;left:296px;top:879px;width:15px;height:76px;background:#cdcdcd;"></div>
<svg style="position:absolute;left:300px;top:755px" width="9" height="7"><path d="M1 5.500l3.500-3.500 3.500 3.500" fill="none" stroke="#505050" stroke-width="2"/></svg>
<svg style="position:absolute;left:300px;top:979px" width="9" height="7"><path d="M1 1.500l3.500 3.500 3.500-3.500" fill="none" stroke="#505050" stroke-width="2"/></svg>
<div style="position:absolute;left:0;top:0;width:296px;height:991px;overflow:hidden">
<svg style="position:absolute;left:0;top:0" width="296" height="991" viewBox="0 0 296 991"><path d="M29.500 750V971M29.500 982V991M50.500 750V959M50.500 984V991" stroke="#808080" stroke-width="1" stroke-dasharray="1 1" shape-rendering="crispEdges"/><path d="M52 760.5H61M52 778.5H61M52 796.5H61M52 814.5H61M52 832.5H61M52 850.5H61M52 868.5H61M52 886.5H61M52 904.5H61M52 922.5H61M52 940.5H61M52 958.5H61" stroke="#808080" stroke-width="1" stroke-dasharray="1 1" shape-rendering="crispEdges"/><path d="M35 976.500H40" stroke="#808080" stroke-dasharray="1 1" shape-rendering="crispEdges"/><g transform="translate(63 751)"><rect x="0.500" y="0.500" width="13" height="13" rx="2.500" fill="#f3d455" stroke="#c9a227"/><rect x="1.500" y="1.500" width="11" height="5" rx="1.800" fill="#fbe88e"/><path d="M8.800 3.600q-1.800-.6-2.300 1.400l-1.200 5q-.4 1.500-1.800 1M4.600 6.600h3.600" fill="none" stroke="#8a6a10" stroke-width="1.200"/><path d="M11.500 8.500l3 3-3 3-3-3z" fill="#f7dc5c" stroke="#b98d17"/></g><g transform="translate(63 769)"><rect x="0.500" y="0.500" width="13" height="13" rx="2.500" fill="#f3d455" stroke="#c9a227"/><rect x="1.500" y="1.500" width="11" height="5" rx="1.800" fill="#fbe88e"/><path d="M8.800 3.600q-1.800-.6-2.300 1.400l-1.200 5q-.4 1.500-1.800 1M4.600 6.600h3.600" fill="none" stroke="#8a6a10" stroke-width="1.200"/><path d="M11.500 8.500l3 3-3 3-3-3z" fill="#f7dc5c" stroke="#b98d17"/></g><g transform="translate(63 787)"><rect x="0.500" y="0.500" width="13" height="13" rx="2.500" fill="#f3d455" stroke="#c9a227"/><rect x="1.500" y="1.500" width="11" height="5" rx="1.800" fill="#fbe88e"/><path d="M8.800 3.600q-1.800-.6-2.300 1.400l-1.200 5q-.4 1.500-1.800 1M4.600 6.600h3.600" fill="none" stroke="#8a6a10" stroke-width="1.200"/><path d="M11.500 8.500l3 3-3 3-3-3z" fill="#f7dc5c" stroke="#b98d17"/></g><g transform="translate(63 805)"><rect x="0.500" y="0.500" width="13" height="13" rx="2.500" fill="#f3d455" stroke="#c9a227"/><rect x="1.500" y="1.500" width="11" height="5" rx="1.800" fill="#fbe88e"/><path d="M8.800 3.600q-1.800-.6-2.300 1.400l-1.200 5q-.4 1.500-1.800 1M4.600 6.600h3.600" fill="none" stroke="#8a6a10" stroke-width="1.200"/><path d="M11.500 8.500l3 3-3 3-3-3z" fill="#f7dc5c" stroke="#b98d17"/></g><g transform="translate(63 823)"><rect x="0.500" y="0.500" width="13" height="13" rx="2.500" fill="#f3d455" stroke="#c9a227"/><rect x="1.500" y="1.500" width="11" height="5" rx="1.800" fill="#fbe88e"/><path d="M8.800 3.600q-1.800-.6-2.300 1.400l-1.200 5q-.4 1.500-1.800 1M4.600 6.600h3.600" fill="none" stroke="#8a6a10" stroke-width="1.200"/><path d="M11.500 8.500l3 3-3 3-3-3z" fill="#f7dc5c" stroke="#b98d17"/></g><g transform="translate(63 841)"><rect x="0.500" y="0.500" width="13" height="13" rx="2.500" fill="#f3d455" stroke="#c9a227"/><rect x="1.500" y="1.500" width="11" height="5" rx="1.800" fill="#fbe88e"/><path d="M8.800 3.600q-1.800-.6-2.300 1.400l-1.200 5q-.4 1.500-1.800 1M4.600 6.600h3.600" fill="none" stroke="#8a6a10" stroke-width="1.200"/><path d="M11.500 8.500l3 3-3 3-3-3z" fill="#f7dc5c" stroke="#b98d17"/></g><g transform="translate(63 859)"><rect x="0.500" y="0.500" width="13" height="13" rx="2.500" fill="#f3d455" stroke="#c9a227"/><rect x="1.500" y="1.500" width="11" height="5" rx="1.800" fill="#fbe88e"/><path d="M8.800 3.600q-1.800-.6-2.300 1.400l-1.200 5q-.4 1.500-1.800 1M4.600 6.600h3.600" fill="none" stroke="#8a6a10" stroke-width="1.200"/><path d="M11.500 8.500l3 3-3 3-3-3z" fill="#f7dc5c" stroke="#b98d17"/></g><g transform="translate(63 877)"><rect x="0.500" y="0.500" width="13" height="13" rx="2.500" fill="#f3d455" stroke="#c9a227"/><rect x="1.500" y="1.500" width="11" height="5" rx="1.800" fill="#fbe88e"/><path d="M8.800 3.600q-1.800-.6-2.300 1.400l-1.200 5q-.4 1.500-1.800 1M4.600 6.600h3.600" fill="none" stroke="#8a6a10" stroke-width="1.200"/><path d="M11.500 8.500l3 3-3 3-3-3z" fill="#f7dc5c" stroke="#b98d17"/></g><g transform="translate(63 895)"><rect x="0.500" y="0.500" width="13" height="13" rx="2.500" fill="#f3d455" stroke="#c9a227"/><rect x="1.500" y="1.500" width="11" height="5" rx="1.800" fill="#fbe88e"/><path d="M8.800 3.600q-1.800-.6-2.300 1.400l-1.200 5q-.4 1.500-1.800 1M4.600 6.600h3.600" fill="none" stroke="#8a6a10" stroke-width="1.200"/><path d="M11.500 8.500l3 3-3 3-3-3z" fill="#f7dc5c" stroke="#b98d17"/></g><g transform="translate(63 913)"><rect x="0.500" y="0.500" width="13" height="13" rx="2.500" fill="#f3d455" stroke="#c9a227"/><rect x="1.500" y="1.500" width="11" height="5" rx="1.800" fill="#fbe88e"/><path d="M8.800 3.600q-1.800-.6-2.300 1.400l-1.200 5q-.4 1.500-1.800 1M4.600 6.600h3.600" fill="none" stroke="#8a6a10" stroke-width="1.200"/><path d="M11.500 8.500l3 3-3 3-3-3z" fill="#f7dc5c" stroke="#b98d17"/></g><g transform="translate(63 931)"><rect x="0.500" y="0.500" width="13" height="13" rx="2.500" fill="#f3d455" stroke="#c9a227"/><rect x="1.500" y="1.500" width="11" height="5" rx="1.800" fill="#fbe88e"/><path d="M8.800 3.600q-1.800-.6-2.300 1.400l-1.200 5q-.4 1.500-1.800 1M4.600 6.600h3.600" fill="none" stroke="#8a6a10" stroke-width="1.200"/><path d="M11.500 8.500l3 3-3 3-3-3z" fill="#f7dc5c" stroke="#b98d17"/></g><g transform="translate(63 949)"><rect x="0.500" y="0.500" width="13" height="13" rx="2.500" fill="#f3d455" stroke="#c9a227"/><rect x="1.500" y="1.500" width="11" height="5" rx="1.800" fill="#fbe88e"/><path d="M8.800 3.600q-1.800-.6-2.300 1.400l-1.200 5q-.4 1.500-1.800 1M4.600 6.600h3.600" fill="none" stroke="#8a6a10" stroke-width="1.200"/><path d="M11.500 8.500l3 3-3 3-3-3z" fill="#f7dc5c" stroke="#b98d17"/></g><g transform="translate(42 966)"><path d="M4 8l4 6 5-6z" fill="#f4d550" stroke="#c79a10" stroke-width=".8"/><ellipse cx="8" cy="6.500" rx="7.500" ry="2.800" fill="#3d9bd6" stroke="#2a78b0" stroke-width=".8"/><ellipse cx="8" cy="4.500" rx="4" ry="3" fill="#5ab0e6" stroke="#2a78b0" stroke-width=".8"/><path d="M12 9.500l3 3-3 3-3-3z" fill="#f7dc5c" stroke="#b98d17"/></g><g transform="translate(63 984)"><path d="M4 8l4 6 5-6z" fill="#f4d550" stroke="#c79a10" stroke-width=".8"/><ellipse cx="8" cy="6.500" rx="7.500" ry="2.800" fill="#3d9bd6" stroke="#2a78b0" stroke-width=".8"/><ellipse cx="8" cy="4.500" rx="4" ry="3" fill="#5ab0e6" stroke="#2a78b0" stroke-width=".8"/><path d="M12 9.500l3 3-3 3-3-3z" fill="#f7dc5c" stroke="#b98d17"/></g><rect x="25.500" y="972.500" width="8" height="8" rx="1" fill="#f4f4f4" stroke="#919191"/><path d="M27.500 976.500h4" stroke="#3a4fa0" stroke-width="1"/></svg>
<span style="position:absolute;left:85.50px;top:751.34px;font-size:12px;line-height:16px;color:#000;white-space:pre;letter-spacing:0.022px;">Custom Moving Averages</span>
<span style="position:absolute;left:85.50px;top:769.34px;font-size:12px;line-height:16px;color:#000;white-space:pre;letter-spacing:-0.034px;">Heiken Ashi</span>
<span style="position:absolute;left:85.50px;top:787.34px;font-size:12px;line-height:16px;color:#000;white-space:pre;letter-spacing:0.248px;">Ichimoku</span>
<span style="position:absolute;left:85.50px;top:805.34px;font-size:12px;line-height:16px;color:#000;white-space:pre;letter-spacing:-0.207px;">iExposure</span>
<span style="position:absolute;left:85.50px;top:823.34px;font-size:12px;line-height:16px;color:#000;white-space:pre;letter-spacing:-0.208px;">MACD</span>
<span style="position:absolute;left:85.50px;top:841.34px;font-size:12px;line-height:16px;color:#000;white-space:pre;letter-spacing:0.435px;">Momentum</span>
<span style="position:absolute;left:85.50px;top:859.34px;font-size:12px;line-height:16px;color:#000;white-space:pre;letter-spacing:-0.333px;">OsMA</span>
<span style="position:absolute;left:85.50px;top:877.34px;font-size:12px;line-height:16px;color:#000;white-space:pre;letter-spacing:-0.170px;">Parabolic</span>
<span style="position:absolute;left:85.50px;top:895.34px;font-size:12px;line-height:16px;color:#000;white-space:pre;letter-spacing:-0.139px;">PositionSizeCalculator</span>
<span style="position:absolute;left:85.50px;top:913.34px;font-size:12px;line-height:16px;color:#000;white-space:pre;letter-spacing:-1.668px;">RSI</span>
<span style="position:absolute;left:85.50px;top:931.34px;font-size:12px;line-height:16px;color:#000;white-space:pre;letter-spacing:-0.136px;">Stochastic</span>
<span style="position:absolute;left:85.50px;top:949.34px;font-size:12px;line-height:16px;color:#000;white-space:pre;letter-spacing:-0.141px;">ZigZag</span>
<span style="position:absolute;left:64.50px;top:967.34px;font-size:12px;line-height:16px;color:#000;white-space:pre;letter-spacing:-0.224px;">Expert Advisors</span>
<span style="position:absolute;left:85.50px;top:985.34px;font-size:12px;line-height:16px;color:#000;white-space:pre;letter-spacing:-0.487px;">MACD Sample</span>
</div>
<div style="position:absolute;left:15px;top:991px;width:299px;height:1px;background:#000;"></div>
<div style="position:absolute;left:16px;top:992px;width:298px;height:22px;background:#f0f0f0;"></div>
<div style="position:absolute;left:18px;top:991px;width:71px;height:20px;background:#000;"></div>
<div style="position:absolute;left:19px;top:991px;width:69px;height:19px;background:#fff;"></div>
<div style="position:absolute;left:89px;top:993px;width:1px;height:18px;background:#a0a0a0;"></div>
<span style="position:absolute;left:28.50px;top:993.14px;font-size:12px;line-height:16px;color:#000;white-space:pre;letter-spacing:0.220px;">Common</span>
<span style="position:absolute;left:99.50px;top:993.14px;font-size:12px;line-height:16px;color:#6d6d6d;white-space:pre;letter-spacing:-0.316px;">Favorites</span>
<div style="position:absolute;left:156px;top:995px;width:1px;height:14px;background:#6d6d6d;"></div>
<div style="position:absolute;left:316px;top:746px;width:1px;height:270px;background:#a0a0a0;"></div>
<div style="position:absolute;left:317px;top:746px;width:1px;height:270px;background:#fff;"></div>
<svg style="position:absolute;left:319px;top:749px" width="9" height="9"><path d="M1.500 2l5 4.600M6.500 2l-5 4.600" stroke="#000" stroke-width="1.800"/></svg>
<div style="position:absolute;left:319px;top:762px;width:13px;height:252px;background:linear-gradient(#d3e0ee,#c3d3e6);"></div>
<span style="position:absolute;left:319.5px;top:1012px;width:50px;height:14px;transform-origin:0 0;transform:rotate(-90deg) scaleX(0.912);font-size:12px;line-height:14px;white-space:pre">Terminal</span>
<div style="position:absolute;left:333px;top:747px;width:1583px;height:1px;background:#c8c8c8;"></div>
<div style="position:absolute;left:333px;top:748px;width:1583px;height:1px;background:#828282;"></div>
<div style="position:absolute;left:333px;top:748px;width:1px;height:244px;background:#828282;"></div>
<div style="position:absolute;left:334px;top:749px;width:1581px;height:242px;background:#fff;"></div>
<div style="position:absolute;left:460px;top:749px;width:1px;height:23px;background:#e0e0e0;"></div>
<div style="position:absolute;left:636px;top:749px;width:1px;height:23px;background:#e0e0e0;"></div>
<div style="position:absolute;left:724px;top:749px;width:1px;height:23px;background:#e0e0e0;"></div>
<div style="position:absolute;left:792px;top:749px;width:1px;height:23px;background:#e0e0e0;"></div>
<div style="position:absolute;left:880px;top:749px;width:1px;height:23px;background:#e0e0e0;"></div>
<div style="position:absolute;left:978px;top:749px;width:1px;height:23px;background:#e0e0e0;"></div>
<div style="position:absolute;left:1076px;top:749px;width:1px;height:23px;background:#e0e0e0;"></div>
<div style="position:absolute;left:1174px;top:749px;width:1px;height:23px;background:#e0e0e0;"></div>
<div style="position:absolute;left:1272px;top:749px;width:1px;height:23px;background:#e0e0e0;"></div>
<div style="position:absolute;left:1370px;top:749px;width:1px;height:23px;background:#e0e0e0;"></div>
<div style="position:absolute;left:1468px;top:749px;width:1px;height:23px;background:#e0e0e0;"></div>
<div style="position:absolute;left:1615px;top:749px;width:1px;height:23px;background:#e0e0e0;"></div>
<div style="position:absolute;left:334px;top:772px;width:1581px;height:1px;background:#e8e8e8;"></div>
<span style="position:absolute;left:340.00px;top:753.44px;font-size:12px;line-height:16px;color:#000;white-space:pre;letter-spacing:-0.035px;">Order</span>
<svg style="position:absolute;left:381px;top:758px" width="5" height="8"><path d="M0.500 7L4 0.500" stroke="#606060" stroke-width="1"/></svg>
<span style="position:absolute;left:604.50px;top:753.44px;font-size:12px;line-height:16px;color:#000;white-space:pre;letter-spacing:0.195px;">Time</span>
<span style="position:absolute;left:693.00px;top:753.44px;font-size:12px;line-height:16px;color:#000;white-space:pre;letter-spacing:0.121px;">Type</span>
<span style="position:absolute;left:766.00px;top:753.44px;font-size:12px;line-height:16px;color:#000;white-space:pre;letter-spacing:-0.461px;">Size</span>
<span style="position:absolute;left:835.00px;top:753.44px;font-size:12px;line-height:16px;color:#000;white-space:pre;letter-spacing:0.081px;">Symbol</span>
<span style="position:absolute;left:946.50px;top:753.44px;font-size:12px;line-height:16px;color:#000;white-space:pre;letter-spacing:-0.068px;">Price</span>
<span style="position:absolute;left:1047.00px;top:753.44px;font-size:12px;line-height:16px;color:#000;white-space:pre;letter-spacing:-0.036px;">S / L</span>
<span style="position:absolute;left:1145.00px;top:753.44px;font-size:12px;line-height:16px;color:#000;white-space:pre;letter-spacing:-0.124px;">T / P</span>
<span style="position:absolute;left:1240.50px;top:753.44px;font-size:12px;line-height:16px;color:#000;white-space:pre;letter-spacing:-0.068px;">Price</span>
<span style="position:absolute;left:1298.00px;top:753.44px;font-size:12px;line-height:16px;color:#000;white-space:pre;letter-spacing:0.099px;">Commission</span>
<span style="position:absolute;left:1435.00px;top:753.44px;font-size:12px;line-height:16px;color:#000;white-space:pre;letter-spacing:-0.379px;">Swap</span>
<span style="position:absolute;left:1580.50px;top:753.44px;font-size:12px;line-height:16px;color:#000;white-space:pre;letter-spacing:0.332px;">Profit</span>
<span style="position:absolute;left:1856.00px;top:753.44px;font-size:12px;line-height:16px;color:#000;white-space:pre;letter-spacing:0.355px;">Comment</span>
<div style="position:absolute;left:334px;top:773px;width:1581px;height:21px;background:#c8c8c8;"></div>
<svg style="position:absolute;left:339px;top:778px" width="10" height="10"><circle cx="5" cy="5" r="3.300" fill="#d8d8d8" stroke="#8c8c8c" stroke-width="1.300"/></svg>
<span style="position:absolute;left:356.00px;top:775.04px;font-size:12px;line-height:16px;color:#000;white-space:pre;letter-spacing:-0.111px;font-weight:bold;">Balance: 100 000.00 USD  Equity: 100 000.00  Free margin: 100 000.00</span>
<span style="position:absolute;left:1568.00px;top:775.04px;font-size:12px;line-height:16px;color:#000;white-space:pre;letter-spacing:0.161px;font-weight:bold;">0.00</span>
<div style="position:absolute;left:334px;top:794px;width:1581px;height:18px;background:#ebebeb;"></div>
<div style="position:absolute;left:460px;top:794px;width:1px;height:18px;background:#d4d4d4;"></div>
<div style="position:absolute;left:636px;top:794px;width:1px;height:18px;background:#d4d4d4;"></div>
<div style="position:absolute;left:724px;top:794px;width:1px;height:18px;background:#d4d4d4;"></div>
<div style="position:absolute;left:792px;top:794px;width:1px;height:18px;background:#d4d4d4;"></div>
<div style="position:absolute;left:880px;top:794px;width:1px;height:18px;background:#d4d4d4;"></div>
<div style="position:absolute;left:978px;top:794px;width:1px;height:18px;background:#d4d4d4;"></div>
<div style="position:absolute;left:1076px;top:794px;width:1px;height:18px;background:#d4d4d4;"></div>
<div style="position:absolute;left:1174px;top:794px;width:1px;height:18px;background:#d4d4d4;"></div>
<div style="position:absolute;left:1272px;top:794px;width:1px;height:18px;background:#d4d4d4;"></div>
<div style="position:absolute;left:1615px;top:794px;width:1px;height:18px;background:#d4d4d4;"></div>
<div style="position:absolute;left:334px;top:812px;width:1581px;height:1px;background:#c0c0c0;"></div>
<svg style="position:absolute;left:337px;top:795px" width="15" height="17"><path d="M1.500 1.500h7l2.500 2.500v10.500h-9.500z" fill="#fff" stroke="#707070"/><path d="M8.500 1.500v2.500h2.500" fill="none" stroke="#707070"/><circle cx="10" cy="12.500" r="3" fill="#2a8ae8" stroke="#1560b8"/></svg>
<span style="position:absolute;left:356.00px;top:795.14px;font-size:12px;line-height:16px;color:#000;white-space:pre;letter-spacing:-0.674px;">180333980</span>
<span style="position:absolute;left:533.50px;top:795.14px;font-size:12px;line-height:16px;color:#000;white-space:pre;letter-spacing:-0.532px;">2020.08.28 15:10:57</span>
<span style="position:absolute;left:675.50px;top:795.14px;font-size:12px;line-height:16px;color:#000;white-space:pre;letter-spacing:0.080px;">buy stop</span>
<span style="position:absolute;left:768.50px;top:795.14px;font-size:12px;line-height:16px;color:#000;white-space:pre;letter-spacing:-0.589px;">0.45</span>
<span style="position:absolute;left:841.50px;top:795.14px;font-size:12px;line-height:16px;color:#000;white-space:pre;letter-spacing:-0.115px;">eurusd</span>
<span style="position:absolute;left:937.00px;top:795.14px;font-size:12px;line-height:16px;color:#000;white-space:pre;letter-spacing:-0.697px;">1.19671</span>
<span style="position:absolute;left:1034.00px;top:795.14px;font-size:12px;line-height:16px;color:#000;white-space:pre;letter-spacing:-0.554px;">0.00000</span>
<span style="position:absolute;left:1132.00px;top:795.14px;font-size:12px;line-height:16px;color:#000;white-space:pre;letter-spacing:-0.554px;">0.00000</span>
<span style="position:absolute;left:1231.00px;top:795.14px;font-size:12px;line-height:16px;color:#000;white-space:pre;letter-spacing:-0.697px;">1.19145</span>
<svg style="position:absolute;left:1601px;top:799px" width="8" height="8"><path d="M1 1l6 6M7 1l-6 6" stroke="#8a8a8a" stroke-width="1.400"/></svg>
<div style="position:absolute;left:333px;top:991px;width:1583px;height:1px;background:#000;"></div>
<div style="position:absolute;left:336px;top:991px;width:49px;height:20px;background:#000;"></div>
<div style="position:absolute;left:337px;top:991px;width:47px;height:19px;background:#fff;"></div>
<div style="position:absolute;left:385px;top:993px;width:1px;height:18px;background:#a0a0a0;"></div>
<span style="position:absolute;left:346.50px;top:993.14px;font-size:12px;line-height:16px;color:#000;white-space:pre;letter-spacing:-0.580px;">Trade</span>
<span style="position:absolute;left:395.00px;top:993.14px;font-size:12px;line-height:16px;color:#6d6d6d;white-space:pre;letter-spacing:-0.337px;">Exposure</span>
<span style="position:absolute;left:463.00px;top:993.14px;font-size:12px;line-height:16px;color:#6d6d6d;white-space:pre;letter-spacing:0.131px;">Account History</span>
<span style="position:absolute;left:569.00px;top:993.14px;font-size:12px;line-height:16px;color:#6d6d6d;white-space:pre;letter-spacing:-0.251px;">News</span>
<span style="position:absolute;left:618.00px;top:993.14px;font-size:12px;line-height:16px;color:#6d6d6d;white-space:pre;letter-spacing:-0.112px;">Alerts</span>
<span style="position:absolute;left:668.00px;top:993.14px;font-size:12px;line-height:16px;color:#6d6d6d;white-space:pre;letter-spacing:0.236px;">Mailbox</span>
<span style="position:absolute;left:738.00px;top:993.14px;font-size:12px;line-height:16px;color:#6d6d6d;white-space:pre;letter-spacing:0.054px;">Market</span>
<span style="position:absolute;left:812.00px;top:993.14px;font-size:12px;line-height:16px;color:#6d6d6d;white-space:pre;letter-spacing:-0.337px;">Signals</span>
<span style="position:absolute;left:869.00px;top:993.14px;font-size:12px;line-height:16px;color:#6d6d6d;white-space:pre;letter-spacing:-0.042px;">Articles</span>
<span style="position:absolute;left:945.00px;top:993.14px;font-size:12px;line-height:16px;color:#6d6d6d;white-space:pre;letter-spacing:-0.486px;">Code Base</span>
<span style="position:absolute;left:1020.00px;top:993.14px;font-size:12px;line-height:16px;color:#6d6d6d;white-space:pre;letter-spacing:-0.383px;">Experts</span>
<span style="position:absolute;left:1078.00px;top:993.14px;font-size:12px;line-height:16px;color:#6d6d6d;white-space:pre;letter-spacing:-0.194px;">Journal</span>
<div style="position:absolute;left:453px;top:995px;width:1px;height:14px;background:#6d6d6d;"></div>
<div style="position:absolute;left:559px;top:995px;width:1px;height:14px;background:#6d6d6d;"></div>
<div style="position:absolute;left:608px;top:995px;width:1px;height:14px;background:#6d6d6d;"></div>
<div style="position:absolute;left:658px;top:995px;width:1px;height:14px;background:#6d6d6d;"></div>
<div style="position:absolute;left:728px;top:995px;width:1px;height:14px;background:#6d6d6d;"></div>
<div style="position:absolute;left:802px;top:995px;width:1px;height:14px;background:#6d6d6d;"></div>
<div style="position:absolute;left:859px;top:995px;width:1px;height:14px;background:#6d6d6d;"></div>
<div style="position:absolute;left:935px;top:995px;width:1px;height:14px;background:#6d6d6d;"></div>
<div style="position:absolute;left:1010px;top:995px;width:1px;height:14px;background:#6d6d6d;"></div>
<div style="position:absolute;left:1068px;top:995px;width:1px;height:14px;background:#6d6d6d;"></div>
<div style="position:absolute;left:1126px;top:995px;width:1px;height:14px;background:#6d6d6d;"></div>
<span style="position:absolute;left:714.00px;top:999.18px;font-size:9px;line-height:13px;color:#e81123;white-space:pre;font-weight:bold;">7</span>
<span style="position:absolute;left:777.00px;top:999.18px;font-size:9px;line-height:13px;color:#e81123;white-space:pre;letter-spacing:-0.006px;font-weight:bold;">127</span>
<span style="position:absolute;left:909.50px;top:999.18px;font-size:9px;line-height:13px;color:#e81123;white-space:pre;letter-spacing:-0.006px;font-weight:bold;">943</span>
<div style="position:absolute;left:0px;top:1016px;width:1920px;height:1px;background:#a0a0a0;"></div>
<div style="position:absolute;left:0px;top:1017px;width:1920px;height:1px;background:#fff;"></div>
<span style="position:absolute;left:2.60px;top:1022.14px;font-size:12px;line-height:16px;color:#000;white-space:pre;letter-spacing:-0.409px;">For Help, press F1</span>
<div style="position:absolute;left:1227px;top:1020px;width:1px;height:18px;background:#a0a0a0;"></div>
<div style="position:absolute;left:1343px;top:1020px;width:1px;height:18px;background:#a0a0a0;"></div>
<div style="position:absolute;left:1445px;top:1020px;width:1px;height:18px;background:#a0a0a0;"></div>
<div style="position:absolute;left:1515px;top:1020px;width:1px;height:18px;background:#a0a0a0;"></div>
<div style="position:absolute;left:1587px;top:1020px;width:1px;height:18px;background:#a0a0a0;"></div>
<div style="position:absolute;left:1655px;top:1020px;width:1px;height:18px;background:#a0a0a0;"></div>
<div style="position:absolute;left:1725px;top:1020px;width:1px;height:18px;background:#a0a0a0;"></div>
<div style="position:absolute;left:1790px;top:1020px;width:1px;height:18px;background:#a0a0a0;"></div>
<span style="position:absolute;left:1232.00px;top:1022.14px;font-size:12px;line-height:16px;color:#000;white-space:pre;letter-spacing:-0.003px;">Default</span>
<svg style="position:absolute;left:1796px;top:1023px" width="25" height="12"><rect x="0" y="1" width="1.500" height="11" fill="#7a2a12"/><rect x="2.4" y="1" width="1.500" height="11" fill="#7a2a12"/><rect x="4.8" y="2" width="1.500" height="10" fill="#2e8a2e"/><rect x="7.2" y="2" width="1.500" height="10" fill="#2e8a2e"/><rect x="9.6" y="3" width="1.500" height="9" fill="#2e8a2e"/><rect x="12" y="3" width="1.500" height="9" fill="#3c9a30"/><rect x="14.4" y="1" width="1.500" height="11" fill="#3c9a30"/><rect x="16.8" y="2" width="1.500" height="10" fill="#a03020"/><rect x="19.2" y="1" width="1.500" height="11" fill="#a03020"/><rect x="21.6" y="1" width="1.500" height="11" fill="#a03020"/></svg>
<span style="position:absolute;left:1823.00px;top:1022.14px;font-size:12px;line-height:16px;color:#000;white-space:pre;letter-spacing:-0.255px;">562/0 kb</span>
</body></html>
